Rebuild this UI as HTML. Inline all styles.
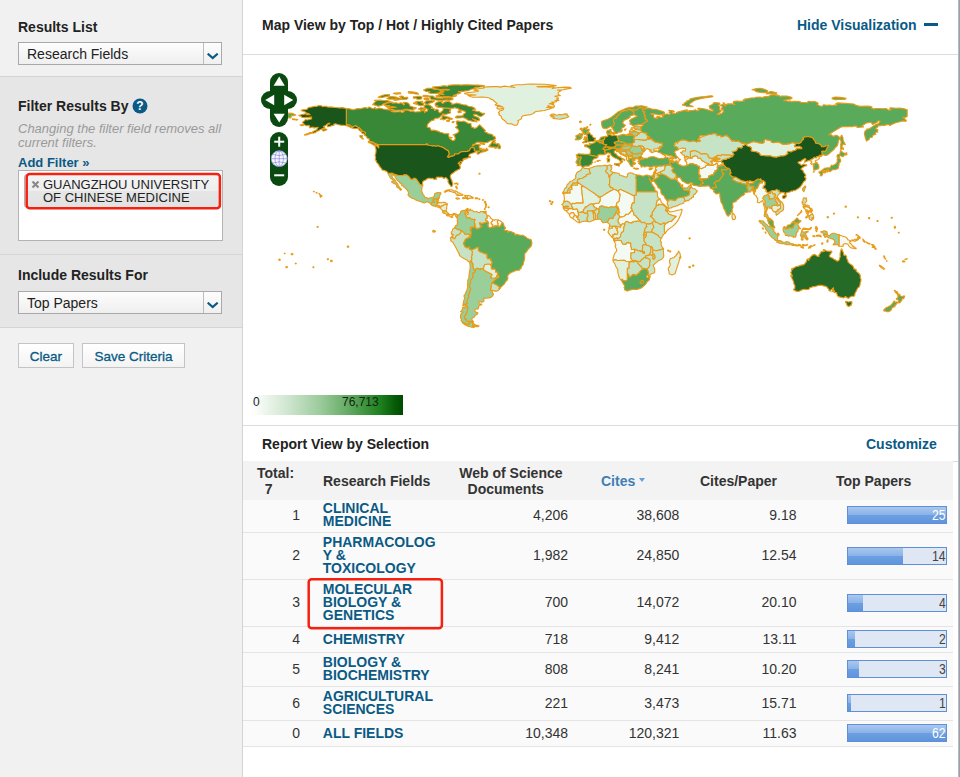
<!DOCTYPE html>
<html>
<head>
<meta charset="utf-8">
<title>InCites Essential Science Indicators</title>
<style>
*{box-sizing:border-box;margin:0;padding:0}
html,body{width:960px;height:777px;overflow:hidden;background:#fff;font-family:"Liberation Sans",sans-serif;color:#222}
body{position:relative}
.abs{position:absolute}
/* sidebar */
#side{position:absolute;left:0;top:0;width:243px;height:777px;background:#f1f1f1;border-right:1px solid #d3d3d3}
#side .sec2{position:absolute;left:0;top:76px;width:242px;height:252px;background:#e6e6e6;border-top:1px solid #d4d4d4;border-bottom:1px solid #d4d4d4}
#side .div2{position:absolute;left:0;top:254px;width:242px;height:1px;background:#d6d6d6}
.h{position:absolute;left:18px;font-weight:bold;font-size:14px;line-height:16px;color:#222;white-space:nowrap}
.sel{position:absolute;left:18px;width:204px;height:23px;border:1px solid #a9a9a9;background:linear-gradient(#fdfdfd,#efefef);font-size:14px;line-height:21px;padding-left:8px;padding-top:1px;color:#222}
.sel i{position:absolute;right:0;top:0;width:18px;height:21px;border-left:1px solid #bdbdbd;background:linear-gradient(#fdfdfd,#f0f0f0)}
.sel i svg{position:absolute;left:3px;top:9.5px}
.btn{position:absolute;top:343px;height:25px;border:1px solid #c4c4c4;background:linear-gradient(#ffffff,#f3f3f3);color:#0a5a85;font-size:13.5px;line-height:23px;padding-top:.6px;text-align:center;-webkit-text-stroke:.3px #0a5a85}
/* main */
#main{position:absolute;left:243px;top:0;width:715px;height:777px;background:#fff}
#rb{position:absolute;left:958px;top:0;width:2px;height:777px;background:linear-gradient(90deg,#c4c9ce,#8b929a)}
.hl{position:absolute;left:0;height:1px;background:#d9dde0;width:715px}
.mh{position:absolute;font-weight:bold;font-size:14px;line-height:16px;color:#222;white-space:nowrap}
.lnk{color:#0a5a85}
/* table */
#tbl{position:absolute;left:0;top:461px;width:710px}
.row{position:absolute;left:0;width:710px;background:#fafafa;border-bottom:1px solid #e4e4e4}
.row div{position:absolute;font-size:14px;line-height:16px;color:#333;white-space:nowrap}
.row .n{left:0;width:57px;text-align:right}
.row .f{left:79.8px;font-weight:bold;font-size:14px;line-height:13px;color:#0a5a85;white-space:normal;width:130px}
.row .d{left:200px;width:125px;text-align:right}
.row .c{left:330px;width:106.3px;text-align:right}
.row .p{left:440px;width:113.5px;text-align:right}
.bar{position:absolute;left:604px;width:100px;height:18px;border:1px solid #5f8fd6;background:#dfe6f4}
.bar b{position:absolute;left:0;top:0;height:16px;background:linear-gradient(#aac7ef 0,#8bb3e8 47%,#6c9fe1 53%,#5f95dd 100%)}
.bar span{position:absolute;right:.4px;top:0;font-size:14px;line-height:16px;color:#444;font-weight:normal;transform:scaleX(.87);transform-origin:100% 50%}
.bar span.w{color:#fff}
</style>
</head>
<body>
<div id="side">
  <div class="h" style="top:18.5px">Results List</div>
  <div class="sel" style="top:42px">Research Fields<i><svg width="12" height="7" viewBox="0 0 12 7"><path d="M0.7 0.6 L5.7 5 L10.7 0.6" fill="none" stroke="#0a5a85" stroke-width="2.1" stroke-linecap="butt" stroke-linejoin="miter"/></svg></i></div>
  <div class="sec2"></div>
  <div class="div2"></div>
  <div class="h" style="top:97.5px">Filter Results By</div>
  <svg class="abs" style="left:132px;top:98px" width="16" height="16" viewBox="0 0 16 16"><circle cx="8" cy="8" r="7.5" fill="#0a5a85"/><text x="8" y="12.2" font-family="Liberation Sans" font-weight="bold" font-size="12" fill="#fff" text-anchor="middle">?</text></svg>
  <div class="abs" style="left:18px;top:122px;width:215px;font-style:italic;font-size:13px;line-height:14px;color:#9a9a9a">Changing the filter field removes all current filters.</div>
  <div class="abs lnk" style="left:18px;top:155px;font-weight:bold;font-size:13px;line-height:16px">Add Filter »</div>
  <div class="abs" style="left:18px;top:170px;width:205px;height:71px;background:#fff;border:1px solid #b3b3b3"></div>
  <div class="abs" style="left:24px;top:174px;width:197px;height:34px;border:1px solid #b0b0b0;border-radius:3px;background:linear-gradient(#f4f4f4 0,#eeeeee 50%,#e6e6e6 51%,#e2e2e2 100%)"></div>
  <svg class="abs" style="left:30.8px;top:180.2px" width="9" height="9" viewBox="0 0 9 9"><path d="M1.5 1.5L7.5 7.5M7.5 1.5L1.5 7.5" stroke="#8a8a8a" stroke-width="2.2" fill="none"/></svg>
  <div class="abs" style="left:43px;top:177.6px;font-size:13px;line-height:13px;color:#222;white-space:nowrap">GUANGZHOU UNIVERSITY<br>OF CHINESE MEDICINE</div>
  <svg class="abs" style="left:20px;top:168px" width="210" height="48" viewBox="20 168 210 48"><rect x="26.7" y="174" width="193.2" height="34.2" rx="3" fill="none" stroke="#f5200f" stroke-width="2.5"/></svg>
  <div class="h" style="top:267.3px">Include Results For</div>
  <div class="sel" style="top:291px">Top Papers<i><svg width="12" height="7" viewBox="0 0 12 7"><path d="M0.7 0.6 L5.7 5 L10.7 0.6" fill="none" stroke="#0a5a85" stroke-width="2.1" stroke-linecap="butt" stroke-linejoin="miter"/></svg></i></div>
  <div class="btn" style="left:18px;width:56px">Clear</div>
  <div class="btn" style="left:82px;width:103px">Save Criteria</div>
</div>
<div id="rb"></div>
<div id="main">
  <div class="mh" style="left:19px;top:17px">Map View by Top / Hot / Highly Cited Papers</div>
  <div class="mh lnk" style="left:554px;top:17px">Hide Visualization</div>
  <div class="abs" style="left:681px;top:23px;width:13.5px;height:3px;background:#0a5a85"></div>
  <div class="hl" style="top:54px"></div>
  <!--MAP-->
<svg class="abs" id="map" style="left:0;top:55px" width="714" height="370" viewBox="0 55 714 370"><g stroke="#ea9a15" stroke-width="1.1" stroke-linejoin="round">
<g fill="#f3f9f3">
<path d="M221.8,195.4L222.8,195.5L224.3,195.8L224.5,196.7L224.4,197.4L223.9,197.7L224.4,198.2L224.3,198.7L223.2,198.4L222.4,198.5L221.3,198.4L220.5,198.7L219.5,198.2L219.7,197.6L221.3,197.8L222.6,198L223.3,197.6L222.4,196.8L222.5,196.2L221.3,195.9Z"/>
<path d="M224.3,195.8L224.5,195.5L225.9,195.5L227,195.9L227.4,195.9L227.7,196.5L228.7,196.5L228.6,197L229.4,197L230.3,197.7L229.6,198.4L228.8,198L228,198.1L227.4,198L227.1,198.3L226.4,198.4L226.2,198L225.6,198.3L224.9,199.4L224.4,199.2L224.3,198.7L224.4,198.2L223.9,197.7L224.4,197.4L224.5,196.7Z"/>
<path d="M214.1,197.9L215.3,198L216.2,198.5L216.5,198.9L215.3,199L214.7,199.3L213.7,199L212.8,198.3L213,198Z"/>
<path d="M233.8,197.9L234.7,198L235,198.3L234.6,198.8L233.3,198.8L232.3,198.8L232.1,198.1L232.4,197.8Z"/>
<path d="M214.2,188.7L213.7,188.8L213.3,187.8L212.6,187.2L213,186.1L213.5,186.2L214.1,187.7ZM213.7,183.8L211.8,184L211.6,183.4L212.5,183.2L213.6,183.3ZM215.1,183.7L214.8,185L214.5,184.7L214.5,183.8L213.7,183.1L213.7,182.9Z"/>
<path d="M245.2,215.6L246.4,216.2L247.5,217.4L247.5,218.3L248.2,218.3L249.1,219.2L249.8,219.8L249.5,221.3L248.5,221.8L248.5,222.2L248.2,223.1L249,224.4L249.6,224.4L249.8,225.4L250.8,226.9L250.4,226.9L249.4,226.8L248.9,227.3L248.1,227.6L247.5,227.6L247.4,228L246.5,227.9L245.4,227.1L245.3,226.3L244.9,225.4L245.1,223.9L245.6,223.3L245.2,222.5L244.6,222.2L244.8,221.4L244.4,221L243.5,221.1L242.3,219.8L242.8,219.3L242.8,218.5L243.9,218.2L244.3,217.9L243.7,217.2L243.8,216.6Z"/>
<path d="M249.8,219.8L251.9,220.1L252.1,219.8L253.5,219.7L255.4,220.1L254.4,221.6L254.6,222.8L255.3,223.9L255,224.6L254.8,225.4L254.4,226.2L253.4,225.8L252.5,226L251.8,225.8L251.7,226.3L251.9,226.7L251.8,227L250.8,226.9L249.8,225.4L249.6,224.4L249,224.4L248.2,223.1L248.5,222.2L248.5,221.8L249.5,221.3Z"/>
<path d="M255.4,220.1L255.9,220.3L257.2,220.7L259.1,222.2L259.4,222.9L258.3,224.5L257.8,225.8L257.1,226.5L256.3,226.6L256.1,226.1L255.7,226L255.1,226.5L254.4,226.2L254.8,225.4L255,224.6L255.3,223.9L254.6,222.8L254.4,221.6Z"/>
<path d="M328.4,204.7L327.2,203.5L326.2,202.2L325,201.7L324.2,201.2L323.2,201.2L322.4,201.6L321.5,201.4L320.9,202L320.7,201.1L321.2,200.2L321.4,198.6L321.2,196.8L321,196L321.2,195.1L320.7,194.3L319.8,193.5L320.2,192.9L327.1,192.9L326.7,190.4L327.2,189.5L328.8,189.4L328.7,184.9L334.5,185L334.5,182.3L341.1,186.6L338.4,186.6L339.2,194.1L340.1,201.7L340.4,201.9L340,203.1L333,203.1L332.7,203.5L332,203.4L331,203.8L329.8,203.3L329.3,203.3L329,204.3Z"/>
<path d="M334.9,216.8L334.4,216.7L334,217.4L333.6,217.4L333.2,217L333.3,216.3L332.6,215.3L332.1,215.5L331.8,215.5L331.3,215.6L331.3,215L331,214.5L331.1,214L330.7,213.3L330.2,212.6L328.8,212.6L328.4,213L327.9,213L327.6,213.4L327.4,213.9L326.5,214.6L325.7,213.6L325.1,212.9L324.6,212.7L324.2,212.4L324,211.6L323.7,211.2L323.2,210.9L324,210.1L324.5,210.1L325,209.8L325.4,209.8L325.6,209.6L325.5,209L325.7,208.8L325.7,208.2L326.5,208.2L327.8,208.7L328.2,208.6L328.3,208.4L329.3,208.5L329.5,208.5L329.6,209.1L329.9,209.1L330.4,208.9L330.7,208.9L331.1,209.4L331.9,209.5L332.4,209.1L332.9,208.9L333.3,208.7L333.7,208.7L334.1,209.1L334.3,209.6L335,210.3L334.7,210.7L334.6,211.3L335,211.1L335.2,211.3L335.1,211.9L335.6,212.4L335.3,212.5L335.1,213.1L335.5,213.8L336,215.2L335.3,215.4L335.1,215.7L335.3,216L335.2,216.8Z"/>
<path d="M323.2,210.9L322.3,210.2L321.5,210.1L321.1,209.6L321.1,209.3L320.6,208.9L320.5,208.6L321.4,208.3L322,208.3L322.5,208.1L325.7,208.2L325.7,208.8L325.5,209L325.6,209.6L325.4,209.8L325,209.8L324.5,210.1L324,210.1Z"/>
<path d="M329.7,218.3L329.2,218.2L327.9,217.5L327,216.6L326.7,215.9L326.5,214.6L327.4,213.9L327.6,213.4L327.9,213L328.4,213L328.8,212.6L330.2,212.6L330.7,213.3L331.1,214L331,214.5L331.3,215L331.3,215.6L331.8,215.5L331,216.3L330.2,217.3L330.1,217.8Z"/>
<path d="M336.2,222.6L335.7,222.6L333.9,221.8L332.3,220.4L330.8,219.5L329.7,218.3L330.1,217.8L330.2,217.3L331,216.3L331.8,215.5L332.1,215.5L332.6,215.3L333.3,216.3L333.2,217L333.6,217.4L334,217.4L334.4,216.7L334.9,216.8L334.8,217.3L335,218.1L334.6,218.9L335.1,219.4L335.7,219.5L336.4,220.2L336.5,220.9L336.3,221.1Z"/>
<path d="M353.4,209.3L353.5,208.1L351.4,207.7L351.4,206.9L350.4,205.8L350.2,205L350.3,204.1L351.4,204L352.1,203.4L354.5,203.3L356,203L356.2,201.9L357.1,200.8L357.1,196.7L359.6,195.9L364.6,192.5L370.6,189.2L373.4,189.9L374.4,190.9L375.6,190.3L376,193L376.7,193.4L376.7,194L377.4,194.6L377.1,195.3L376.4,198.9L376.3,201.1L374.1,202.8L373.3,205.1L374,205.8L374,206.9L375.2,206.9L375,207.7L374.5,207.8L374.4,208.4L374.1,208.4L372.9,206.5L372.5,206.4L371.1,207.4L369.8,206.9L368.9,206.8L368.3,207L367.3,207L366.3,207.7L365.4,207.8L363.3,206.9L362.5,207.3L361.6,207.3L360.9,206.6L359.2,206L357.3,206.2L356.8,206.6L356.6,207.6L356.1,208.3L356,209.8L354.6,208.8L354,208.8Z"/>
<path d="M375,207.7L375.2,206.9L374,206.9L374,205.8L373.3,205.1L374.1,202.8L376.3,201.1L376.4,198.9L377.1,195.3L377.4,194.6L376.7,194L376.7,193.4L376,193L375.6,190.3L377.4,189.3L384.3,192.6L391.3,196L391.4,202.9L389.9,202.8L389.1,204.1L388.6,205.2L389,205.6L388.4,206.1L388.6,206.8L388.2,207.6L388,208.2L388.6,208.1L389,208.8L389,209.8L389.6,210.3L389.6,210.7L388.5,211L387.6,211.7L386.3,213.6L384.7,214.5L383,214.4L382.5,214.5L382.7,215.1L381.8,215.7L381,216.4L378.9,217.1L378.4,216.7L378.1,216.7L377.8,217.1L376.4,217.2L376.6,216.8L376.1,215.6L375.8,214.8L375.1,214.5L374,213.5L374.4,212.7L375.2,212.9L375.7,212.7L376.7,212.8L375.7,211.2L375.8,210L375.7,208.8Z"/>
<path d="M376.4,217.2L377.8,217.1L378.1,216.7L378.4,216.7L378.9,217.1L381,216.4L381.8,215.7L382.7,215.1L382.5,214.5L383,214.4L384.7,214.5L386.3,213.6L387.6,211.7L388.5,211L389.6,210.7L389.8,211.5L390.8,212.6L390.8,213.3L390.5,214L390.6,214.6L391.3,215L392.6,215.8L393.5,216.5L393.5,217.1L394.7,218L395.5,218.8L395.9,219.8L397.2,220.5L397.5,221.1L396.9,221.2L395.8,221.2L394.5,221L393.8,221.2L393.6,221.6L393,221.6L392.3,221.3L390.4,222.1L389.6,222L389.3,222.1L388.8,223.2L387.5,222.8L386.2,222.7L385.1,222L383.7,221.4L382.7,222L382,222.9L381.9,224.1L380.8,224L379.6,223.7L378.6,224.6L377.6,226.2L377.5,225.7L377.4,224.9L376.6,224.4L375.9,223.5L375.8,222.8L375,221.9L375.1,221.4L374.9,220.7L375.1,219.3L375.5,219Z"/>
<path d="M366.5,226.2L369.4,226.3L369.4,228.3L366.8,228.3L366.2,228.4L365.9,228.2Z"/>
<path d="M378.2,240.5L378.6,241.8L379.1,242.8L379.5,243.4L380.2,244.3L381.3,244.2L381.9,243.9L382.9,244.2L383.1,243.7L383.6,242.7L384.7,242.6L384.8,242.3L385.6,242.3L385.5,243L387.6,242.9L387.7,244L388,244.7L387.7,245.8L387.9,246.8L388.5,247.5L388.4,249.6L388.8,249.4L389.6,249.5L390.6,249.2L391.4,249.3L391.6,249.8L391.4,250.7L391.7,251.5L391.5,252.2L391.6,252.8L388,252.7L387.9,258.3L389.1,259.7L390.2,260.8L387,261.5L382.8,261.3L381.6,260.4L374.5,260.5L374.2,260.6L373.2,259.9L372,259.8L371,260.1L370.1,260.4L370,259.3L370.2,257.8L370.8,256.2L370.9,255.5L371.5,253.9L371.9,253.2L372.9,252L373.5,251.2L373.7,249.9L373.6,249L373,248.3L372.6,247.3L372.2,246.2L372.2,245.9L372.8,245.2L372.2,243.5L371.9,242.3L371,241.2L371.2,240.9L371.9,240.6L372.4,240.7L373,240.4ZM371.4,240.1L370.9,240.3L370.5,239L371.2,238.3L371.7,238L372.4,238.6L371.7,238.9L371.4,239.4Z"/>
<path d="M400.3,280.8L400.9,281.3L400.4,282.2L400.1,282.7L399.1,283L398.8,283.6L398.1,283.8L396.8,282.4L397.8,281.3L398.7,280.6L399.5,280.3Z"/>
<path d="M421.3,225.3L422.8,223.4L422.8,223.3L423.3,222.8L424.4,222.8L425.9,221.5L428.2,221.5L428.2,221.4L433.1,216.3L433.1,216.2L433,216.2L431.7,216.2L426,214.2L425.3,213.5L424.7,212.7L424,211.7L424.4,211.1L425.1,210.2L425.6,210.5L426,211.2L426.7,211.9L426.8,211.9L427.6,212L429.3,211.5L431.2,211.3L432.7,210.8L433.6,210.6L434.2,210.3L435.2,210.3L437.5,209.8L438.3,209.2L439,209.2L439,209.7L438.8,210.7L438.9,211.6L438.5,212.2L438,214.1L437.1,216.1L436.1,218.3L434.6,220.9L433.1,222.8L431,225.2L429.3,226.6L426.7,228.4L425,229.7L423.1,231.8L422.7,232.7L422.3,233.1L421.3,231.7L421.3,225.3Z"/>
<path d="M423.7,208.3L423.1,207.7L422.3,206.7L421.6,206.1L421.1,205.5L419.6,204.8L418.4,204.8L418,204.4L416.9,204.8L415.9,204.1L415.3,205.4L413.3,205L413.1,204.3L413.9,201.7L414,200.6L414.6,200L415.9,199.7L416.8,198.7L417.8,200.8L418.3,202.4L419.2,203.2L421.6,204.9L422.6,205.9L423.5,206.9L424.1,207.5L424.9,208Z"/>
<path d="M424.9,208L425.4,208.5L425.3,209.3L424.3,209.7L425.1,210.2L424.4,211.1L424,210.8L423.6,210.9L422.6,210.9L422.6,210.3L422.5,209.9L423,209.1L423.7,208.3Z"/>
<path d="M320.2,207.2L320.4,206.5L322.4,206.4L322.7,206L323.3,205.9L324,206.4L324.5,206.4L325.1,206.1L325.5,206.6L324.7,207L323.9,207L323.2,206.6L322.5,207L322.2,207L321.8,207.3Z"/>
<path d="M456.6,167.9L458.4,168.6L459.7,168.3L460.1,167.5L461.5,167.3L462.5,166.7L462.8,165.4L464.3,165L464.5,164.4L465.4,164.9L465.9,164.9L466.9,164.9L468.2,165.3L468.7,165.5L470,164.9L470.6,165.3L471.1,164.5L472.2,164.5L472.4,164.2L472.6,163.6L473.4,162.9L474.3,163.3L474.1,163.9L474.7,164L474.5,165.4L475.2,166L475.8,165.6L476.6,165.5L477.7,164.7L478.9,164.8L480.7,164.8L481,165.3L480,165.5L479.1,165.8L477.1,166L475.2,166.4L474.2,167.2L474.6,167.9L474.8,168.8L473.9,169.5L474,170.2L473.5,170.8L471.9,170.8L472.5,171.9L471.4,172.3L470.7,173.4L470.8,174.5L470.1,174.9L469.5,174.8L468.1,175L467.9,175.5L466.6,175.5L465.6,176.5L465.6,178L463.3,178.7L462.1,178.5L461.8,178.9L460.7,178.7L459,179L456,178.1L457.6,176.5L457.5,175.4L456.1,175.1L456,174L455.4,172.6L456.2,171.6L455.4,171.3L455.9,170.1Z"/>
<path d="M509.9,181.7L510.6,182.2L510.5,183.3L509.1,183.3L507.6,183.2L506.5,183.5L504.9,182.8L504.8,182.5L506,181.2L507,180.7L508.2,181.2L509.1,181.2Z"/>
<path d="M523.6,194.9L522.6,195.7L521.3,195.8L520.6,197.6L519.8,198L520.7,199.5L521.8,200.8L522.5,201.9L521.8,203.4L521.2,203.8L521.7,204.7L522.8,206L523,207L523,207.8L523.7,209.4L522.7,211L521.9,212.8L521.7,211.5L522.2,210.2L521.7,209.2L521.8,207.3L521.1,206.4L520.5,204.3L520.2,202.1L519.4,200.6L518.3,201.5L516.3,202.7L515.3,202.6L514.2,202.2L514.8,200L514.5,198.4L513.1,196.4L513.3,195.7L512.3,195.5L511.1,194.1L510.9,192.7L511.6,192.9L511.6,191.7L512.5,191.3L512.3,190.5L512.7,189.9L512.7,188.1L514.1,188.5L514.9,187.1L515,186.2L515.9,184.8L515.9,183.8L518.1,182.6L519.4,182.9L519.2,181.8L519.9,181.5L519.7,180.8L520.7,180.7L521.3,181.7L522.1,182.1L522.1,183.5L522.1,184.9L520.4,186.4L520.2,188.4L522.1,188.2L522.5,189.8L523.6,190.1L523.1,191.5L524.4,192.2L525.1,192.5L526.4,192L526.5,192.7L525,193.9L524.6,194.5Z"/>
<path d="M568,245.7L568.2,246.6L568.2,246.1L569.7,246.1L571,244.9L571.5,244.7L572.2,244.9L571.5,245.4L569.7,246.1L568.2,246.6L567.1,247.9Z"/>
<path d="M577.9,156.1L578.2,156.4L577.5,156.3L576.8,156.9L576.2,157.5L576.3,158.8L575.4,159.1L575.1,159.4L574.4,160L573.3,160.2L572.5,160.7L572.5,161.5L572.3,161.7L572.9,162L573.9,162.7L573.7,163.1L572.9,163.3L571.7,163.3L571,164.1L570.3,164.1L570.1,164.2L569.3,163.9L569.1,164.2L568.6,164.4L568.5,164L568.1,163.9L567.6,163.6L568.1,162.8L568.5,162.6L568.3,162.3L568.8,161.4L568.6,161.1L567.6,160.9L566.8,160.4L568.2,159.3L570.1,158.4L571.4,157.1L572.2,157.7L573.7,157.7L573.4,156.8L576.1,156.1L576.8,155.1L577.9,156.1Z"/>
<path d="M456.6,167.9L456.5,166.4L455.2,166.4L453.2,164.8L451.8,164.6L449.8,163.7L448.6,163.6L447.8,163.9L446.7,163.9L445.4,164.9L443.9,165.2L443.6,164L443.8,162.1L442.4,161.5L442.9,160.3L441.7,160.2L442.1,158.8L443.8,159.2L445.3,158.6L444,157.6L443.5,156.6L442.1,157L441.9,158.3L441.4,157.2L442.2,156.6L444.2,156.2L445.3,156.7L446.6,158.1L447.5,158L449.4,158L449.1,157.1L450.6,156.5L452.1,155.5L454.5,156.4L454.6,157.8L455.3,158.2L457.2,158.1L457.8,158.4L458.6,160.2L460.7,161.4L461.8,162.2L463.6,163.1L465.9,163.8L465.9,164.9L465.4,164.9L464.5,164.4L464.3,165L462.8,165.4L462.5,166.7L461.5,167.3L460.1,167.5L459.7,168.3L458.4,168.6Z"/>
<path d="M473.7,159.9L473.1,160.4L471.2,160.1L471,161.1L472.9,161L475.1,161.6L478.4,161.3L478.8,162.9L479.4,162.7L480.5,163.1L480.4,163.8L480.7,164.8L478.9,164.8L477.7,164.7L476.6,165.5L475.8,165.6L475.2,166L474.5,165.4L474.7,164L474.1,163.9L474.3,163.3L473.4,162.9L472.6,163.6L472.4,164.2L472.2,164.5L471.1,164.5L470.6,165.3L470,164.9L468.7,165.5L468.2,165.3L469.2,163.5L468.8,162.2L467.5,161.8L468,161L469.4,161.1L470.2,160.1L470.8,159L473.1,158.6L472.8,159.4L473,159.9Z"/>
<path d="M596,234.7L599.1,235.9L602.3,236.9L603.5,237.8L604.5,238.7L604.8,239.8L607.7,240.8L608.1,241.8L606.5,241.9L606.9,243.1L608.4,244.2L609.6,246.1L610.6,246L610.5,246.8L611.8,247.1L611.3,247.4L613.2,248.2L613,248.7L611.8,248.8L611.4,248.4L609.9,248.2L608.1,247.9L606.8,246.8L605.8,245.8L604.9,244.3L602.6,243.5L601.1,244L600,244.6L600.3,245.9L598.9,246.5L597.9,246.2L596.1,246.1L596,234.7ZM616.4,236.6L617.1,237.2L617.3,238.1L616.7,238.5L616.4,237.5L616,236.8L615.2,236.2L614.2,235.5L612.9,235L613.4,234.6L614.4,235.1L615,235.4ZM614,240.4L613.1,240.8L612.2,241.2L611.3,241.2L609.8,240.7L608.8,240.2L609,239.7L610.6,240L611.5,239.8L612,238.9L612.2,239.9L613.2,239.7L613.7,239.1L614.7,238.5L614.5,237.5L615.5,237.5L615.9,237.7L615.8,238.7L615.2,239.8L614.3,239.9ZM620.1,239.5L620.6,239.9L621.5,241L622.3,241.6L622.1,242.1L621.6,242.3L620.8,241.6L620,240.5L619.7,239.2L619.9,239Z"/>
<path d="M628.6,244.2L630.3,244.7L631.5,246.1L632.2,247L631.9,247.3L630.6,246.8L628.9,245.1ZM629.1,247.3L629.9,246.6L630.7,247.4L629.8,247.5ZM624.9,243L626.5,243.5L627.2,244L626.1,244.1L624.7,243.5ZM623.1,242.1L624.2,242.4L624.9,243.1L623.8,242.8ZM631.5,248L632.9,248.5L633.4,249.1L632.2,249.1Z"/>
<path d="M640.8,255.7L641.7,256.2L641.8,258L641.1,257.6L640.8,257.1ZM641.8,258.2L642.9,259L642.4,259.2L641.8,258.7ZM643.4,260.8L644.1,261.1L643.8,261.5Z"/>
<path d="M636.3,265.3L637,265.4L638,266L638.8,266.5L639.4,267L640.8,268.1L641.7,268.9L641,269.3L640.1,268.9L638.8,268.1L637.7,267.2L636.5,265.9Z"/>
<path d="M659.5,261.1L660.9,260.8L661.9,261.6L661.4,262L659.7,261.9ZM661.8,259.2L663.2,258.9L664.2,258.5L664,259L662.8,259.6Z"/>
<path d="M50,254.1L49.6,253.5L48.6,253.5L48.1,254.1L48.6,254.8L49.6,254.8Z"/>
<path d="M44.1,266.5L43.3,266.5L42.8,267L43.2,267.7L44,267.7L44.5,267.1Z"/>
<path d="M36.1,259.1L35.7,259.7L36,260.3L36.8,260.4L37.3,259.8L37,259.2Z"/>
<path d="M87.5,260.8L87.8,261.6L88.8,261.7L89.3,261.1L89,260.3L88,260.2Z"/>
<path d="M104.5,247.2L105.3,247.3L105.8,246.8L105.5,246.1L104.7,246L104.2,246.5Z"/>
<path d="M85.1,259.7L85.5,259.3L85.3,258.8L84.7,258.7L84.3,259.1L84.5,259.6Z"/>
<path d="M191.6,231.5L191.4,230.6L190.4,230.4L189.6,231L189.9,231.9L190.9,232.1Z"/>
<path d="M192.3,231.1L191.7,230.9L191.3,231.3L191.4,231.8L192,231.9L192.4,231.6Z"/>
<path d="M308.3,203.1L307.6,203.6L307.8,204.2L308.5,204.5L309.2,204.1L309.1,203.4Z"/>
<path d="M306.3,200.9L306.4,201.5L307.1,201.8L307.7,201.4L307.6,200.8L306.9,200.6Z"/>
<path d="M308.9,202.4L309.5,202.6L310,202.3L310,201.8L309.4,201.5L308.9,201.8Z"/>
<path d="M450.2,266.3L450.9,265.9L450.9,265.2L450.2,264.9L449.5,265.2L449.5,265.9Z"/>
<path d="M447.3,267.4L447.4,266.7L446.7,266.4L445.9,266.7L445.9,267.4L446.6,267.8Z"/>
<path d="M447.3,238.1L446.7,237.7L446,238L446,238.6L446.6,238.9L447.2,238.7Z"/>
<path d="M425.4,250L424.7,250.3L424.6,250.9L425.2,251.3L425.9,251L426,250.4Z"/>
<path d="M426.8,251.2L426.6,251.7L427.1,252L427.7,251.9L427.8,251.3L427.4,251Z"/>
<path d="M360.5,229.9L361,230.4L361.7,230.2L361.9,229.6L361.4,229.2L360.6,229.3Z"/>
<path d="M236.3,174.3L236.9,174.1L237.1,173.6L236.7,173.3L236.1,173.4L235.9,173.9Z"/>
<path d="M603.4,206.6L603,206.1L602.2,206.2L602,206.8L602.4,207.3L603.1,207.2Z"/>
<path d="M591.2,213.1L590.6,213.2L590.4,213.7L590.7,214.1L591.3,214L591.6,213.5Z"/>
<path d="M584.4,216.7L584,217.2L584.4,217.7L585.2,217.7L585.5,217.1L585.1,216.6Z"/>
<path d="M614.3,217.3L614.6,217.7L615.2,217.7L615.5,217.3L615.2,216.8L614.6,216.8Z"/>
<path d="M625.7,218.7L626.4,218.7L626.8,218.2L626.5,217.6L625.8,217.6L625.4,218.1Z"/>
<path d="M634.8,221.4L635.1,221L634.9,220.5L634.2,220.5L633.9,220.9L634.1,221.4Z"/>
<path d="M649.4,217.9L649.2,217.4L648.6,217.3L648.2,217.7L648.4,218.2L649.1,218.3Z"/>
<path d="M652.4,227.4L651.8,227.3L651.3,227.7L651.6,228.2L652.2,228.2L652.6,227.8Z"/>
<path d="M651.6,226.3L651.3,226.6L651.4,227L651.9,227.1L652.3,226.8L652.2,226.4Z"/>
<path d="M655.3,232.5L655.4,233L655.9,233.1L656.3,232.8L656.2,232.3L655.7,232.2Z"/>
<path d="M242.6,205L243.2,205.2L243.6,204.9L243.5,204.3L242.9,204.2L242.5,204.5Z"/>
<path d="M242.6,203.8L243.1,203.5L243,203L242.4,202.8L241.9,203.1L242,203.6Z"/>
<path d="M242.8,202.1L242.7,201.5L242,201.3L241.4,201.6L241.5,202.3L242.2,202.5Z"/>
<path d="M243.5,205.7L243,205.5L242.6,205.7L242.6,206.2L243.1,206.3L243.5,206.1Z"/>
<path d="M242.7,206.7L242.2,206.9L242.3,207.4L242.7,207.6L243.2,207.3L243.2,206.9Z"/>
<path d="M241.4,208.8L241.4,209.3L241.8,209.5L242.3,209.3L242.3,208.8L241.8,208.6Z"/>
<path d="M245,207.4L245.5,207.7L246.1,207.5L246.2,207L245.6,206.7L245.1,206.9Z"/>
<path d="M239.8,200.4L240.3,200.2L240.4,199.8L240,199.5L239.5,199.7L239.4,200.1Z"/>
<path d="M236.8,199.5L236.9,199L236.5,198.8L236,198.9L235.9,199.3L236.3,199.6Z"/>
<path d="M75.2,226.7L74.7,226.4L74.1,226.5L74,227L74.5,227.4L75.1,227.2Z"/>
<path d="M70.5,266.8L70,266.9L69.9,267.4L70.3,267.7L70.8,267.6L70.9,267.1Z"/>
<path d="M52.4,263.2L52.2,263.6L52.6,263.9L53.1,263.8L53.3,263.4L52.9,263.1Z"/>
<path d="M41.3,253.5L41.6,253.8L42,253.7L42.2,253.4L41.9,253.1L41.5,253.2Z"/>
</g>
<g fill="#e0f1e0">
<path d="M267.9,85.8L273.8,84.8L279.9,84.8L282.2,84.2L288.3,84L302.3,84.2L313.2,85.6L310,86.3L303.3,86.4L293.9,86.6L294.8,86.9L301,86.7L306.2,87.3L309.6,86.7L311.1,87.4L309.2,88.4L313.6,87.7L322.1,87.1L327.3,87.4L328.3,88.1L321.2,89.4L320.2,89.8L314.6,90.1L318.7,90.2L316.6,91.4L315.2,92.6L315.3,94.5L317.4,95.7L314.6,95.7L311.8,96.3L315,97.2L315.4,98.7L313.5,98.9L315.8,100.4L311.9,100.5L313.9,101.2L313.4,101.8L310.9,102.1L308.5,102.1L310.7,103.3L310.7,104.1L307.2,103.3L306.3,103.8L308.7,104.2L311,105.3L311.6,106.7L308.5,107.1L307.2,106.4L305,105.4L305.6,106.6L303.6,107.5L308.2,107.6L310.6,107.6L305.9,109.2L301.2,110.5L296.1,111.1L294.1,111.2L292.3,111.8L289.9,113.7L286.1,114.9L284.9,115L282.6,115.4L280.1,115.8L278.6,116.9L278.6,118.1L277.7,119.3L274.8,120.7L275.5,122L274.7,123.5L273.8,125.2L271.4,125.3L268.8,123.9L265.3,123.8L263.6,122.9L262.4,121.2L259.4,119L258.5,117.9L258.3,116.3L255.9,114.7L256.5,113.4L255.3,112.8L257.1,110.7L259.7,110.1L260.4,109.4L260.8,108L258.8,108.6L257.8,108.9L256.2,109.1L254.1,108.6L254,107.4L254.7,106.4L256.3,106.4L259.8,106.9L256.8,105.8L255.3,105.2L253.5,105.4L252.1,105L254,103.3L253,102.7L251.6,101.5L249.5,99.6L247.2,99L247.3,98.2L242.6,97.2L238.9,97.1L234.2,97.2L229.9,97.3L227.9,96.7L224.9,95.6L229.5,95.1L233,95L225.5,94.5L221.6,93.8L221.8,93.1L228.4,92.3L234.8,91.5L235.5,90.8L230.8,90.2L232.3,89.5L238.4,88.3L240.9,88.1L240.2,87.3L244.3,86.9L249.7,86.6L255.1,86.6L257,87.1L261.6,86.1L265.8,86.8L268.2,86.9L271.9,87.5L267.7,86.6Z"/>
<path d="M193.9,199.1L193.9,198.8L194.1,198.7L194.4,199L195,197.9L195.3,197.9L195.3,198.1L195.7,198.1L195.7,198.6L195.4,199.4L195.5,199.6L195.3,200.3L195.5,200.4L195.2,201.3L194.9,201.8L194.6,201.8L194.2,202.4L193.7,202.4L193.9,200.5Z"/>
<path d="M197.1,207.5L196.8,207L196.2,206.8L196.4,206.1L196.1,205.9L195.7,205.8L195,206L194.9,205.8L194.4,205.5L194,205.1L193.5,205L193.9,204.5L193.7,204.2L193.9,203.9L194.7,203.4L195.5,202.7L195.7,202.8L196,202.5L196.5,202.4L196.7,202.6L197,202.5L197.8,202.7L198.6,202.6L199.2,202.4L199.4,202.2L199.9,202.3L200.3,202.4L200.8,202.4L201.1,202.2L201.9,202.5L202.2,202.5L202.8,202.9L203.3,203.3L203.9,203.5L204.3,204L203.8,204L203.5,204.2L202.9,204.4L202.5,204.4L202.1,204.7L201.7,204.6L201.4,204.3L201.3,204.4L201,204.8L200.9,204.8L200.8,205.1L200.2,205.6L199.9,205.8L199.7,206L199.2,205.7L198.8,206.1L198.5,206.1L198,206.2L198.1,207L197.8,207L197.6,207.4Z"/>
<path d="M196.2,206.8L196,207.2L195,207.2L194.4,207L193.7,206.7L192.7,206.6L192.2,206.2L192.3,205.9L192.9,205.5L193.2,205.3L193.1,205.1L193.5,205L194,205.1L194.4,205.5L194.9,205.8L195,206L195.7,205.8L196.1,205.9L196.4,206.1Z"/>
<path d="M199.9,210.8L199.3,210.3L198.4,209.6L198.1,209L197.3,208.4L196.4,207.6L196.6,207.4L196.9,207.6L197.1,207.5L197.6,207.4L197.8,207L198.1,207L198,206.2L198.5,206.1L198.8,206.1L199.2,205.7L199.7,206L199.9,205.8L200.2,205.6L200.8,205.1L200.9,204.8L201,204.8L201.3,204.4L201.4,204.3L201.7,204.6L202.1,204.7L202.5,204.4L202.9,204.4L203.5,204.2L203.8,204L204.3,204L204.2,204.2L204.1,204.5L204.3,205.2L203.9,205.8L203.7,206.5L203.6,207.3L203.7,207.7L203.8,208.5L203.5,208.7L203.3,209.4L203.5,209.9L203.1,210.3L203.2,210.8L203.5,211.1L203,211.4L202.5,211.3L202.2,211L201.7,210.8L201.3,211.1L200.1,210.6Z"/>
<path d="M213.6,217.6L213,217.1L212.6,216.1L213,215.7L212.6,215.5L212.3,215L211.4,214.5L210.6,214.6L210.3,215.2L209.6,215.6L209.2,215.7L209,216.1L209.8,217L209.4,217.2L209.1,217.5L208.3,217.6L208,216.5L207.8,216.8L207.2,216.7L206.8,216L206.1,215.9L205.7,215.7L204.9,215.7L204.9,216.1L204.7,215.8L204.8,215.5L204.9,215.1L204.8,214.8L205.1,214.6L204.7,214.4L204.7,213.6L205.4,213.5L206,214.1L206,214.5L206.7,214.6L206.9,214.4L207.3,214.8L208.2,214.7L208.9,214.3L210,213.9L210.6,213.4L211.6,213.5L211.5,213.7L212.5,213.7L213.2,214L213.8,214.6L214.5,215L214.3,215.3L214.7,216.3L214.3,216.8L213.8,216.7Z"/>
<path d="M205.9,189.7L207.4,189.8L208.8,189.8L210.4,190.4L211.1,191.1L212.7,190.9L213.4,191.3L214.8,192.3L215.9,193.1L216.5,193.1L217.5,193.5L217.4,194L218.7,194L220,194.8L219.8,195.2L218.7,195.4L217.5,195.5L216.3,195.3L213.8,195.5L214.9,194.5L214.2,194.1L213.1,194L212.5,193.5L212.1,192.5L211.1,192.5L209.5,192.1L208.9,191.7L206.7,191.4L206.1,191.1L206.7,190.6L205,190.5L203.8,191.5L203,191.5L202.8,191.9L201.9,192.1L201.2,191.9L202.1,191.4L202.5,190.8L203.2,190.4L204.1,190Z"/>
<path d="M241.9,211.4L242.9,211.2L243.2,211.2L243.2,212.5L241.7,212.7L241.4,212.6L241.9,212.1Z"/>
<path d="M240.1,269.1L240.8,267L240.8,266L241.7,264.5L244.7,264L246.3,264L248,264.9L248,265.5L248.5,266.4L248.4,268.8L250.3,269.1L251,268.8L252.1,269.3L252.5,269.8L252.6,271.4L252.8,272.1L253.5,272.1L254.1,271.9L254.8,272.2L254.8,273.1L254.5,274.2L254.2,275.2L253.9,276.7L252.3,278.1L250.9,278.3L249,278.1L247.2,277.6L248.9,274.9L248.7,274.2L246.9,273.5L244.7,272.2L243.3,271.9L240.1,269.1Z"/>
<path d="M384.3,155.9L384.1,155.6L383.4,156.5L383.5,157L383.1,156.9L382.6,156.3L381.9,156L382.1,155.7L382.3,154.7L382.9,154.3L383.2,154.1L383.7,154.4L384,154.7L384.5,154.9L385.2,155.2L385.1,155.4L384.7,155.8Z"/>
<path d="M385.9,156.7L385.9,157.1L385.6,157L385.5,156.4L385.1,156.2L384.7,155.8L385.1,155.4L385.5,155.3L385.7,154.7L386,154.6L386.3,154.8L386.6,154.9L386.8,155.2L387.1,155.3L387.4,155.6L387.7,155.6L387.5,156L387.3,156.2L387.4,156.4L387,156.4Z"/>
<path d="M385.6,157L385.4,157.6L385.7,158.4L386.4,158.8L386.3,159.3L385.8,159.5L385.7,160.1L384.9,161L384.6,160.8L384.5,160.4L383.6,159.9L383.4,159L383.6,157.8L383.8,157.3L383.5,157L383.4,156.5L384.1,155.6L384.3,155.9L384.7,155.8L385.1,156.2L385.5,156.4Z"/>
<path d="M396.2,145.9L396.6,145.7L397.7,145.5L399,146L399.8,146.1L400.5,146.6L400.4,147.2L401.1,147.5L401.3,148.2L401.9,148.6L401.8,148.9L402.1,149.1L401.7,149.2L400.6,149.2L400.4,148.9L400.1,149L400.2,149.4L399.7,149.9L399.4,150.5L399,150.7L398.7,149.9L398.9,149.2L398.8,148.4L397.8,147.4L397.2,146.6L396.7,146.1Z"/>
<path d="M328.4,204.7L329,204.3L329.3,203.3L329.8,203.3L331,203.8L332,203.4L332.7,203.5L333,203.1L340,203.1L340.4,201.9L340.1,201.7L339.2,194.1L338.4,186.6L341.1,186.6L346.9,190.4L352.8,194.2L353.2,195L354.3,195.5L355.2,195.8L355.2,196.9L357.1,196.7L357.1,200.8L356.2,201.9L356,203L354.5,203.3L352.1,203.4L351.4,204L350.3,204.1L349.2,204.1L348.7,203.8L347.8,204L346.2,204.8L345.8,205.3L344.5,206.1L344.2,206.5L343.5,206.9L342.6,206.7L342.2,207.1L341.9,208.3L340.5,209.7L340.6,210.3L340.1,211.1L340.2,212.1L339.5,212.3L339.1,212.6L338.8,211.8L338.3,212L338,212L337.7,212.5L336.3,212.5L335.8,212.2L335.6,212.4L335.1,211.9L335.2,211.3L335,211.1L334.6,211.3L334.7,210.7L335,210.3L334.3,209.6L334.1,209.1L333.7,208.7L333.3,208.7L332.9,208.9L332.4,209.1L331.9,209.5L331.1,209.4L330.7,208.9L330.4,208.9L329.9,209.1L329.6,209.1L329.5,208.5L329.6,207.9L329.5,207.2L328.8,206.7L328.5,205.8Z"/>
<path d="M369.4,226.3L370.2,226.1L371.2,226.4L372.3,226.1L372.5,226.2L372.4,227L372.9,227.9L374.2,227.8L374.6,228.1L373.8,230.1L374.7,231.2L374.9,232.5L374.6,233.7L374.1,234.5L372.6,234.4L371.6,233.6L371.5,234.4L370.3,234.6L369.7,235L370.4,236.2L369,237.2L367.2,235.4L366.1,233.9L365,232.1L365.1,231.6L365.5,231L365.9,229.7L366.2,228.4L366.8,228.3L369.4,228.3Z"/>
<path d="M372.4,238.6L371.7,238L371.2,238.3L370.5,239L369,237.2L370.4,236.2L369.7,235L370.3,234.6L371.5,234.4L371.6,233.6L372.6,234.4L374.1,234.5L374.6,233.7L374.9,232.5L374.7,231.2L373.8,230.1L374.6,228.1L374.2,227.8L372.9,227.9L372.4,227L372.5,226.2L374.7,226.3L376.1,226.8L377.5,227.2L377.6,226.2L378.6,224.6L379.6,223.7L380.8,224L381.9,224.1L381.8,225.1L381.3,226.1L380.9,227.2L380.7,228.7L380.8,229.7L380.5,230.3L380.5,230.9L380.3,231.5L379.1,232.3L378.3,233.2L377.6,234.9L377.6,236.4L377.2,236.9L376.2,237.8L375.1,238.9L374.5,238.6L374.4,238.1L373.4,238.1L372.8,238.7Z"/>
<path d="M378.2,280.1L376.9,278.8L376.2,277.5L375.8,275.8L375.4,274.6L374.8,271.9L374.8,269.8L374.6,268.8L373.9,268.1L373,266.7L372.1,264.6L371.7,263.5L370.3,261.8L370.1,260.4L371,260.1L372,259.8L373.2,259.9L374.2,260.6L374.5,260.5L381.6,260.4L382.8,261.3L387,261.5L390.2,260.8L391.6,260.4L392.8,260.5L393.5,260.9L393.5,261.1L392.5,261.5L392,261.5L390.9,262.1L390.2,261.4L387.5,262L386.2,262.1L386.1,268.3L384.4,268.4L384.4,273.5L384.4,279.9L382.9,280.8L381.9,281L380.8,280.6L380,280.5L379.7,279.8L379,279.3Z"/>
<path d="M405.7,276.9L405.3,277.7L404.3,277.9L403.3,276.9L403.3,276.3L403.7,275.7L403.9,275.2L404.4,275L405.3,275.4L405.6,276.1Z"/>
<path d="M436.2,252L436.7,252.7L437.1,253.9L437.4,256L437.9,256.8L437.7,257.7L437.4,258.2L436.8,257.1L436.4,257.7L436.8,258.9L436.6,259.7L436.2,260.1L436,261.6L435.3,263.6L434.5,266L433.4,269.3L432.7,271.8L432,273.8L430.5,274.2L429,274.9L428,274.5L426.6,273.9L426.1,272.9L426,271.4L425.4,270L425.2,268.7L425.5,267.5L426.3,267.2L426.4,266.6L427.2,265.3L427.3,264.2L426.9,263.3L426.6,262.2L426.5,260.6L427.1,259.6L427.3,258.5L428.2,258.5L429.2,258.1L429.8,257.8L430.6,257.8L431.6,256.8L433,255.7L433.5,254.8L433.3,254.1L434,254.3L435,253.1L435,252L435.6,251.2Z"/>
<path d="M400.9,238.1L400.8,235.9L400.4,235.2L401.4,235.3L402,234.3L402.9,234.4L403,235.1L403.4,235.5L403.4,236.1L403,236.4L402.3,237.3L401.6,238Z"/>
<path d="M402.8,232.2L403.5,233.2L403.4,234.2L402.9,234.4L402,234.3L401.4,235.3L400.4,235.2L400.5,234.2L400.8,234.1L400.8,233L401.3,232.5L401.8,232.7L402.2,232Z"/>
<path d="M422.3,157.6L422.5,156.9L422.1,155.7L421.1,155L420.1,154.8L419.5,154.3L419.7,154.1L421.2,154.4L423.7,154.7L426.1,155.5L426.4,155.8L427.5,155.6L429.1,155.9L429.7,156.6L430.7,157L430.3,157.3L431.2,158.2L430.9,158.4L430,158.3L428.7,157.8L428.2,158.1L425.8,158.4L424.1,157.5Z"/>
<path d="M425.8,158.4L428.2,158.1L428.6,158.6L429.3,158.9L428.9,159.3L429.8,159.9L429.4,160.5L430.1,160.9L430.9,161.2L430.9,162.4L430.3,162.5L429.6,161.5L429.6,161.2L428.8,161.2L428.3,160.8L427.9,160.8L427.2,160.3L425.9,159.9L426.1,159Z"/>
<path d="M428.3,160.8L428.8,161.2L429.6,161.2L429.6,161.5L429.1,162.3L428.2,161.5L427.9,160.8ZM432.4,158.2L433.2,158.3L433.5,157.8L434.5,157.1L435.5,158.1L436.4,159.3L437.2,159.4L437.7,159.8L436.3,160L436,161.3L435.7,162L435,162.4L435.1,163.2L434.6,163.3L433.5,162.4L434.2,161.5L433.6,161L433,161.2L430.9,162.4L430.9,161.2L430.1,160.9L429.4,160.5L429.8,159.9L428.9,159.3L429.3,158.9L428.6,158.6L428.2,158.1L428.7,157.8L430,158.3L430.9,158.4L431.2,158.2L430.3,157.3L430.7,157L431.2,157.1Z"/>
<path d="M417.4,171.9L414,173.7L412.1,173L412,173L412.3,172.8L412.2,172L412.7,171.1L413.6,170.4L413.3,169.8L412.6,169.7L412.4,168.3L412.8,167.6L413.3,167.2L413.8,166.8L413.9,165.9L414.4,166.2L416.4,165.7L417.3,166L418.7,166L420.7,165.4L421.7,165.4L423.7,165.1L422.8,166.2L421.8,166.7L422,167.9L421.3,170.1Z"/>
<path d="M411.8,173.6L411.8,174.7L411.5,175.2L410.7,175.4L410.8,174.9L411.2,174.7L410.8,174.5L411.1,173.4Z"/>
<path d="M492.6,217.1L492.3,218.9L491.6,219.4L490.1,219.8L489.2,218.4L488.9,215.9L489.7,213L490.9,214L491.7,215.2Z"/>
<path d="M530.5,211.6L529.8,210.7L528.9,208.9L528.5,206.8L529.6,205.3L531.9,205L533.5,205.3L535,205.9L535.8,204.7L537.3,205.4L537.7,206.5L537.5,208.6L534.6,210L535.3,211L533.5,211.2L532,211.9Z"/>
<path d="M503,144L504.8,143.8L508.2,142.2L510.8,141.4L512.3,142L514.2,142L515.3,142.8L517.1,142.9L519.6,143.3L521.3,142.1L520.6,141.1L522.4,139.2L524.4,140L526,140.2L528,140.6L528.3,141.9L530.8,142.7L532.5,142.3L534.7,142.1L536.4,142.4L538.2,143.2L539.2,144.1L540.8,144.1L543,144.3L544.6,143.9L546.9,143.6L549.5,142.4L550.5,142.6L551.5,143.2L553.5,143L552.7,144.3L551.5,146.1L551.9,146.8L552.9,146.6L554.6,146.8L556,146.2L557.4,146.8L558.9,148L558.8,148.6L557.4,148.4L554.8,148.6L553.6,149.1L552.3,150.3L549.7,151L547.9,151.9L546.1,151.5L545.1,151.4L544.2,152.5L544.8,153.2L545.1,153.8L543.8,154.3L542.6,155.3L540.5,155.9L537.9,156L535.1,156.6L533.1,157.5L532.3,157L530.2,157L527.6,155.9L525.9,155.7L523.6,155.9L519.9,155.5L518,155.5L517,154.5L516.2,152.9L515.1,152.7L513,151.6L510.6,151.4L508.6,151.1L508,150.3L508.6,148.3L507.4,146.9L504.9,146.2L503.4,145.3Z"/>
</g>
<g fill="#c6e3c6">
<path d="M204.7,215.8L203.7,215.4L203.4,215.1L203.6,214.8L203.5,214.4L203,214L202.3,213.6L201.7,213.4L201.6,212.9L201.1,212.6L201.3,213.1L200.9,213.5L200.5,213L200,212.8L199.7,212.5L199.7,212L200,211.4L199.5,211.2L199.9,210.8L200.1,210.6L201.3,211.1L201.7,210.8L202.2,211L202.5,211.3L203,211.4L203.5,211.1L203.9,212L204.6,212.7L205.4,213.5L204.7,213.6L204.7,214.4L205.1,214.6L204.8,214.8L204.9,215.1L204.8,215.5Z"/>
<path d="M225,209.6L224.9,210L223.9,210.2L224.5,211L224.5,211.9L223.7,213L224.4,214.4L225.1,214.2L225.5,213L225,212.4L224.9,211L227,210.3L226.8,209.5L227.4,209L228.1,210.2L229.3,210.2L230.4,211.2L230.5,211.8L232,211.8L233.9,211.6L234.9,212.4L236.3,212.6L237.2,212L237.3,211.6L239.4,211.5L241.5,211.5L240,212L240.6,212.8L242,213L243.3,213.8L243.6,215.2L244.5,215.2L245.2,215.6L243.8,216.6L243.7,217.2L244.3,217.9L243.9,218.2L242.8,218.5L242.8,219.3L242.3,219.8L243.5,221.1L243.8,221.6L243.1,222.3L241.1,222.9L239.9,223.2L239.4,223.6L238,223.2L236.7,222.9L236.4,223.1L237.2,223.6L237.1,224.7L237.3,225.8L238.8,226L238.9,226.4L237.7,226.8L237.5,227.6L236.7,227.9L235.5,228.3L235.1,228.8L233.7,228.9L232.8,228L232.3,226.3L231.8,225.7L231.2,225.3L232,224.4L232,224L231.5,223.5L231.1,222.3L231.3,221.1L231.7,220.5L232,219.5L231.3,219.2L230.3,219.5L229.1,219.3L228.4,219.5L227.2,218L226.2,217.8L223.9,218L223.5,217.4L223.1,217.2L223,216.9L223.2,216.2L223.1,215.5L222.7,215.1L222.4,214.3L221.6,214.2L222,213.2L222.2,211.9L222.8,211.3L223.4,210.8L223.9,209.9Z"/>
<path d="M209.3,236.1L210.3,234.8L209.9,234.1L209.2,234.9L208.2,234.1L208.5,233.6L208.2,232.1L208.8,231.8L209.2,230.7L209.8,229.6L209.7,228.9L210.7,228.5L211.8,227.8L213.6,228.8L213.9,228.7L214.4,229.5L215.8,229.7L216.3,229.5L217.2,230.1L217.9,230.5L218.2,231.8L217.6,232.9L215.7,234.8L213.6,235.4L212.6,237L212.2,238.2L211.2,238.9L210.5,238L209.8,237.8L209.1,237.9L209,237.3L209.5,236.9Z"/>
<path d="M228,260.9L227.6,261.8L226.7,262.3L224.9,261.3L224.8,260.5L221.3,258.8L218.2,256.9L216.8,255.8L216.1,254.4L216.4,253.9L214.9,251.6L213.2,248.3L211.5,244.9L210.8,244.1L210.3,242.8L208.9,241.6L207.7,240.9L208.2,240.1L207.4,238.5L207.9,237.3L209.3,236.1L209.5,236.9L209,237.3L209.1,237.9L209.8,237.8L210.5,238L211.2,238.9L212.2,238.2L212.6,237L213.6,235.4L215.7,234.8L217.6,232.9L218.2,231.8L217.9,230.5L218.4,230.3L219.6,231.1L220.1,231.9L220.9,232.4L222,234.2L223.3,234.4L224.2,234L224.9,234.3L225.9,234.1L227.2,235L226.1,236.7L226.6,236.8L227.5,237.7L225.9,237.6L225.7,237.9L224.3,238.2L222.3,239.4L222.2,240.2L221.7,240.8L221.9,241.8L220.8,242.3L220.8,243L220.4,243.3L221.1,244.9L222,246L221.7,246.7L222.9,246.8L223.5,247.8L225.1,247.8L226.5,246.8L226.4,249.4L227.2,249.6L228.1,249.3L229.6,252.1L229.3,252.7L229.2,254L229.2,255.5L228.5,256.3L228.8,257L228.4,257.6L229.1,259L228,260.9Z"/>
<path d="M228.1,249.3L229.4,249.5L230.3,249.4L230.7,248.9L232.3,248.2L233.2,247.6L235.5,247.3L235.3,248.6L235.5,249.2L235.4,250.4L237.3,252L239.2,252.3L239.9,252.9L241.1,253.3L241.8,253.8L242.9,253.8L243.9,254.3L244,255.3L244.3,255.8L244.4,256.6L243.9,256.6L244.5,258.6L247.9,258.7L247.6,259.7L247.8,260.4L248.8,260.9L249.2,262L248.9,263.3L248.4,264.1L248.6,265.1L248,265.5L248,264.9L246.3,264L244.7,264L241.7,264.5L240.8,266L240.8,267L240.1,269.1L239.8,268.7L237.8,268.6L237.1,270L236.1,268.8L233.8,268.3L232.4,269.9L231.1,270.2L230.4,267.8L229.5,265.8L230.1,264.1L229.1,263.4L228.9,262.1L228,260.9L229.1,259L228.4,257.6L228.8,257L228.5,256.3L229.2,255.5L229.2,254L229.3,252.7L229.6,252.1Z"/>
<path d="M248.9,283L250.1,282.8L251.8,284.2L252.5,284.1L254.3,285.2L255.7,286.2L256.7,287.4L255.9,288.2L256.4,289.2L255.6,290.3L253.6,291.3L252.4,290.9L251.4,291.1L249.8,290.4L248.6,290.4L247.5,289.5L247.7,288.3L248.1,287.9L248.1,286.2L248.5,284.4Z"/>
<path d="M324.3,114.1L323.9,115.2L325.9,116.4L323.6,117.7L318.6,118.9L317,119.2L314.8,119L309.9,118.4L311.6,117.7L307.8,116.8L310.9,116.5L310.8,115.9L307.1,115.5L308.3,114.4L311,114.1L313.7,115.3L316.3,114.4L318.5,114.9L321.4,113.9Z"/>
<path d="M386.5,132.3L386.5,131L387.4,129.9L389,129.3L390.4,130.6L391.8,130.5L392.1,129.2L393.6,128.9L394.4,129.1L395.9,129.8L397.3,129.8L398.2,130.2L398.3,131L398.9,132L397,132.7L395.9,133L394.3,132.2L393.3,132.1L393.1,131.7L391.4,131.9L388.4,131.7Z"/>
<path d="M382.9,151.8L383.5,151.8L383.1,152.6L383.9,153.2L383.6,154.1L383.2,154.1L382.9,154.3L382.3,154.7L382.1,155.7L380.5,155L379.9,154.3L379.2,153.9L378.4,153.2L378,152.7L377.2,151.9L377.5,151.2L378.2,151.6L378.5,151.2L379.4,151.2L380.9,151.4L382.1,151.4Z"/>
<path d="M385.6,157L385.9,157.1L385.9,156.7L387,156.4L387.4,156.4L388,156.3L388.8,156.2L389.6,156.8L389.8,158L389.4,158L389.1,158.3L388.2,158.3L387.5,158.7L386.4,158.8L385.7,158.4L385.4,157.6Z"/>
<path d="M390.7,136L392.4,136L394.3,135.3L394.7,134.3L396.1,133.8L395.9,133L397,132.7L398.9,132L400.7,132.5L401,132.9L401.9,132.7L403.6,133.1L403.8,133.9L403.4,134.4L404.5,135.6L405.2,135.9L405.1,136.2L406.3,136.5L406.8,137L406.1,137.4L404.7,137.3L404.4,137.5L404.8,138L405.2,139.2L403.7,139.3L403.2,139.6L403.1,140.5L402.4,140.3L400.8,140.4L400.3,140L399.7,140.3L399,140.1L397.6,140L395.7,139.6L393.9,139.5L392.6,139.5L391.6,140L390.8,140.1L390.7,139.3L390.2,138.5L391.2,138.1L391.2,137.4L390.8,136.8Z"/>
<path d="M405.2,139.2L405.8,139.2L406.3,138.8L406.8,138.9L408.6,138.7L409.7,139.7L409.3,140.1L409.4,140.6L410.8,140.7L411.5,141.5L411.4,141.8L413.7,142.4L415,142.2L416.1,143L417.1,142.9L419.7,143.5L419.7,144L419,145L419.4,145.9L419.1,146.5L417.4,146.6L416.5,147.1L416.4,147.9L415.1,148L413.9,148.6L412.2,148.7L410.7,149.3L410.8,150.4L411.7,150.8L413.5,150.7L413.1,151.4L411.2,151.7L408.9,152.7L407.9,152.3L408.3,151.5L406.4,151L406.7,150.7L408.3,150.1L407.8,149.7L405.1,149.2L405,148.6L403.4,148.8L402.7,149.8L401.4,151.1L400.6,150.8L399.8,151L399,150.7L399.4,150.5L399.7,149.9L400.2,149.4L400.1,149L400.4,148.9L400.6,149.2L401.7,149.2L402.1,149.1L401.8,148.9L401.9,148.6L401.3,148.2L401.1,147.5L400.4,147.2L400.5,146.6L399.8,146.1L399,146L397.7,145.5L396.6,145.7L396.2,145.9L395.4,145.9L395,146.3L393.7,146.5L393.1,146.8L392.3,146.4L391.2,146.3L390.1,146.1L389.3,146.5L389.2,146.1L388.3,145.6L388.6,144.9L389.1,144.4L389.5,144.5L389,143.7L390.6,142.3L391.5,142.1L391.6,141.6L390.8,140.1L391.6,140L392.6,139.5L393.9,139.5L395.7,139.6L397.6,140L399,140.1L399.7,140.3L400.3,140L400.8,140.4L402.4,140.3L403.1,140.5L403.2,139.6L403.7,139.3Z"/>
<path d="M340.6,167.7L341.6,168.5L343.3,168.3L345.1,168.7L345.9,168.7L346.5,169.9L346.6,170.9L347.2,172.8L347.7,173.1L347.4,173.8L345.1,174.1L344.3,174.8L343.3,174.9L343.2,176.2L341.2,176.9L340.5,177.8L339.1,178.2L337.3,178.5L334.5,179.8L334.5,181.9L334.2,181.9L334.3,182.8L333.2,182.9L332.6,183.3L331.8,183.3L331.2,183L329.7,183.2L329.2,184.6L328.6,184.7L327.8,186.9L325.4,188.8L324.8,191.2L324.1,192L323.9,192.6L319.9,192.8L320,191.9L320.7,191.5L321.2,190.6L321.1,190L321.7,188.7L322.7,187.6L323.3,187.4L323.8,186.3L323.8,185.4L324.4,184.3L325.6,183.7L326.7,181.9L327.6,181.2L329.2,181L330.6,179.8L331.5,179.3L332.9,177.9L332.5,175.7L333.2,174.2L333.4,173.3L334.5,172.1L336.3,171.3L337.6,170.6L338.7,168.8L339.3,167.7Z"/>
<path d="M370.6,189.2L364.6,192.5L359.6,195.9L357.1,196.7L355.2,196.9L355.2,195.8L354.3,195.5L353.2,195L352.8,194.2L346.9,190.4L341.1,186.6L334.5,182.3L334.5,181.9L334.5,179.8L337.3,178.5L339.1,178.2L340.5,177.8L341.2,176.9L343.2,176.2L343.3,174.9L344.3,174.8L345.1,174.1L347.4,173.8L347.7,173.1L347.2,172.8L346.6,170.9L346.5,169.9L345.9,168.7L347.5,167.8L349.4,167.5L350.5,166.8L352.2,166.2L355.2,165.9L358.1,165.8L358.9,166L360.6,165.4L362.5,165.3L363.2,165.7L364.4,165.6L364,166.5L364.3,168.2L363.9,169.6L362.8,170.6L362.9,171.9L364.4,173L364.4,173.4L365.5,174.1L366.2,177.2L366.8,178.8L366.9,179.6L366.6,181L366.7,181.8L366.5,182.8L366.6,183.9L365.9,184.6L367,185.9L367,186.6L367.6,187.6L368.5,187.3L369.9,188.1Z"/>
<path d="M366.2,177.2L365.5,174.1L364.4,173.4L364.4,173L362.9,171.9L362.8,170.6L363.9,169.6L364.3,168.2L364,166.5L364.4,165.6L366.3,164.9L367.5,165.1L367.4,166L368.9,165.4L369,165.7L368.2,166.6L368.2,167.4L368.8,167.8L368.5,169.3L367.4,170.2L367.7,171.2L368.6,171.2L369.1,172L369.7,172.3L369.6,173.6L368.8,174.1L368.2,174.7L367,175.4L367.2,176.1L367.1,176.8Z"/>
<path d="M393.3,191.8L393.3,195.2L391.3,195.2L391.3,196L384.3,192.6L377.4,189.3L375.6,190.3L374.4,190.9L373.4,189.9L370.6,189.2L369.9,188.1L368.5,187.3L367.6,187.6L367,186.6L367,185.9L365.9,184.6L366.6,183.9L366.5,182.8L366.7,181.8L366.6,181L366.9,179.6L366.8,178.8L366.2,177.2L367.1,176.8L367.2,176.1L367,175.4L368.2,174.7L368.8,174.1L369.6,173.6L369.7,172.3L371.8,172.9L372.5,172.7L374,173L376.3,173.8L377.1,175.4L378.7,175.7L381.1,176.4L383,177.3L383.8,176.8L384.7,176L384.3,174.7L384.8,173.9L386.1,173L387.3,172.8L389.7,173.2L390.3,173.9L390.9,173.9L391.5,174.2L393.2,174.5L393.6,175L393,175.9L393.3,176.6L392.8,177.7L393.3,179.1Z"/>
<path d="M334.5,181.9L334.5,182.3L334.5,185L328.7,184.9L328.8,189.4L327.2,189.5L326.7,190.4L327.1,192.9L320.2,192.9L319.8,193.5L319.9,192.8L323.9,192.6L324.1,192L324.8,191.2L325.4,188.8L327.8,186.9L328.6,184.7L329.2,184.6L329.7,183.2L331.2,183L331.8,183.3L332.6,183.3L333.2,182.9L334.3,182.8L334.2,181.9Z"/>
<path d="M320.4,206.5L319.7,205.1L318.8,204.5L319.6,204.1L320.5,202.9L320.9,202L321.5,201.4L322.4,201.6L323.2,201.2L324.2,201.2L325,201.7L326.2,202.2L327.2,203.5L328.4,204.7L328.5,205.8L328.8,206.7L329.5,207.2L329.6,207.9L329.5,208.5L329.3,208.5L328.3,208.4L328.2,208.6L327.8,208.7L326.5,208.2L325.7,208.2L322.5,208.1L322,208.3L321.4,208.3L320.5,208.6L320.2,207.2L321.8,207.3L322.2,207L322.5,207L323.2,206.6L323.9,207L324.7,207L325.5,206.6L325.1,206.1L324.5,206.4L324,206.4L323.3,205.9L322.7,206L322.4,206.4L320.4,206.5Z"/>
<path d="M344.7,221.5L343.9,221.5L342.6,221.1L341.5,221.2L339.5,221.5L338.2,222L336.5,222.6L336.2,222.6L336.3,221.1L336.5,220.9L336.4,220.2L335.7,219.5L335.1,219.4L334.6,218.9L335,218.1L334.8,217.3L334.9,216.8L335.2,216.8L335.3,216L335.1,215.7L335.3,215.4L336,215.2L335.5,213.8L335.1,213.1L335.3,212.5L335.6,212.4L335.8,212.2L336.3,212.5L337.7,212.5L338,212L338.3,212L338.8,211.8L339.1,212.6L339.5,212.3L340.2,212.1L341,212.5L341.3,213L342.1,213.4L342.7,213L343.5,212.9L344.7,213.4L345.2,215.8L344.4,217.3L344,219.3L344.7,220.8Z"/>
<path d="M344.7,213.4L343.5,212.9L342.7,213L342.1,213.4L341.3,213L341,212.5L340.2,212.1L340.1,211.1L340.6,210.3L340.5,209.7L341.9,208.3L342.2,207.1L342.6,206.7L343.5,206.9L344.2,206.5L344.5,206.1L345.8,205.3L346.2,204.8L347.8,204L348.7,203.8L349.2,204.1L350.3,204.1L350.2,205L350.4,205.8L351.4,206.9L351.4,207.7L353.5,208.1L353.4,209.3L353,209.9L352.2,210L351.8,210.8L351.2,211L349.7,210.9L348.9,210.8L348.3,211.1L347.6,211L344.5,211L344.5,212Z"/>
<path d="M351.5,219.8L348.8,220.9L347.8,221.5L346.2,222L344.7,221.5L344.7,220.8L344,219.3L344.4,217.3L345.2,215.8L344.7,213.4L344.5,212L344.5,211L347.6,211L348.3,211.1L348.9,210.8L349.7,210.9L349.6,211.5L350.3,212.4L350.3,213.7L350.5,215L350.9,215.7L350.5,217.3L350.6,218.1L351.1,219.2Z"/>
<path d="M352.9,219.5L351.5,219.8L351.1,219.2L350.6,218.1L350.5,217.3L350.9,215.7L350.5,215L350.3,213.7L350.3,212.4L349.6,211.5L349.7,210.9L351.2,211L351,211.9L352.1,213L352.2,213.9L352.6,214.2L352.5,218.3Z"/>
<path d="M354.4,219.3L352.9,219.5L352.5,218.3L352.6,214.2L352.2,213.9L352.1,213L351,211.9L351.2,211L351.8,210.8L352.2,210L353,209.9L353.4,209.3L354,208.8L354.6,208.8L356,209.8L355.9,210.4L356.3,211.4L355.9,212.1L356.1,212.6L355.3,213.7L354.7,214.2L354.4,215.3L354.5,216.4Z"/>
<path d="M372.5,226.2L372.3,226.1L371.2,226.4L370.2,226.1L369.4,226.3L366.5,226.2L366.8,224.8L366.1,223.7L365.3,223.4L364.9,222.6L364.5,222.3L364.5,221.9L365,220.6L365.8,218.9L366.3,218.9L367.3,217.9L368,217.9L369,218.6L370.2,218L370.3,217.3L370.7,216.6L371,215.7L371.9,215L372.3,213.7L372.7,213.4L372.9,212.4L373.4,211.3L374.8,210L374.9,209.4L375.1,209.1L374.4,208.4L374.5,207.8L375,207.7L375.7,208.8L375.8,210L375.7,211.2L376.7,212.8L375.7,212.7L375.2,212.9L374.4,212.7L374,213.5L375.1,214.5L375.8,214.8L376.1,215.6L376.6,216.8L376.4,217.2L375.5,219L375.1,219.3L374.9,220.7L375.1,221.4L375,221.9L375.8,222.8L375.9,223.5L376.6,224.4L377.4,224.9L377.5,225.7L377.6,226.2L377.5,227.2L376.1,226.8L374.7,226.3L372.5,226.2Z"/>
<path d="M403.5,224.1L403.4,226.1L404.1,226.4L403.6,227L402.9,227.4L402.2,228.3L401.9,229.2L401.8,230.6L401.4,231.2L401.3,232.5L400.8,233L400.8,234.1L400.5,234.2L400.4,235.2L400.8,235.9L400.9,238.1L401.2,239.7L401.1,240.6L401.4,241.6L402.4,242.6L403.4,244.8L402.7,244.6L400.3,244.9L399.9,245.1L399.4,246.2L399.8,247L399.5,249.1L399.2,250.8L399.7,251.1L400.9,251.8L401.4,251.5L401.6,253.4L400.2,253.4L399.5,252.4L398.9,251.6L397.5,251.4L397.1,250.5L396,251L394.6,250.8L394.1,250L393,249.8L392.1,249.9L392,249.3L391.4,249.3L390.6,249.2L389.6,249.5L388.8,249.4L388.4,249.6L388.5,247.5L387.9,246.8L387.7,245.8L388,244.7L387.7,244L387.6,242.9L385.5,243L385.6,242.3L384.8,242.3L384.7,242.6L383.6,242.7L383.1,243.7L382.9,244.2L381.9,243.9L381.3,244.2L380.2,244.3L379.5,243.4L379.1,242.8L378.6,241.8L378.2,240.5L373,240.4L372.4,240.7L371.9,240.6L371.2,240.9L370.9,240.3L371.4,240.1L371.4,239.4L371.7,238.9L372.4,238.6L372.8,238.7L373.4,238.1L374.4,238.1L374.5,238.6L375.1,238.9L376.2,237.8L377.2,236.9L377.6,236.4L377.6,234.9L378.3,233.2L379.1,232.3L380.3,231.5L380.5,230.9L380.5,230.3L380.8,229.7L380.7,228.7L380.9,227.2L381.3,226.1L381.8,225.1L381.9,224.1L382,222.9L382.7,222L383.7,221.4L385.1,222L386.2,222.7L387.5,222.8L388.8,223.2L389.3,222.1L389.6,222L390.4,222.1L392.3,221.3L393,221.6L393.6,221.6L393.8,221.2L394.5,221L395.8,221.2L396.9,221.2L397.5,221.1L398.5,222.5L399.3,222.7L399.8,222.4L400.6,222.5L401.6,222.2L402,222.9L403.5,224.1Z"/>
<path d="M394.5,262.6L394.8,262.9L395.4,263.9L397.4,265.8L398.1,266L398.1,266.6L398.6,267.8L400,268L401.1,268.8L398.6,270.1L397,271.4L396.5,272.6L395.9,273.2L395,273.4L394.7,274.2L394.5,274.7L393.4,275.1L392,275.1L391.1,274.6L390.4,274.4L389.5,274.8L389.1,275.6L388.3,276.1L387.4,276.9L386.2,277.1L385.8,276.5L385.9,275.4L384.9,273.7L384.4,273.5L384.4,268.4L386.1,268.3L386.2,262.1L387.5,262L390.2,261.4L390.9,262.1L392,261.5L392.5,261.5L393.5,261.1L393.8,261.2Z"/>
<path d="M404.2,269.1L403.2,268.9L402.6,269.1L401.8,268.8L401.1,268.8L400,268L398.6,267.8L398.1,266.6L398.1,266L397.4,265.8L395.4,263.9L394.8,262.9L394.5,262.6L393.8,261.2L395.7,261.4L396.3,261.6L396.9,261.6L397.9,260.4L399.4,259L400,258.8L400.2,258.2L401.2,257.5L402.5,257.3L402.7,258L404.1,257.9L404.9,258.3L405.3,258.7L406.1,258.8L407.1,259.4L407.1,261.6L406.7,262.8L406.6,264.1L406.9,264.7L406.7,265.7L406.5,265.8L406,267.1Z"/>
<path d="M406.9,246.3L407.7,247.1L408.2,248.6L407.9,249.1L407.5,250.5L407.9,251.9L407.3,252.5L406.8,254.2L407.7,254.6L402.4,256.1L402.5,257.3L401.2,257.5L400.2,258.2L400,258.8L399.4,259L397.9,260.4L396.9,261.6L396.3,261.6L395.7,261.4L393.8,261.2L393.5,261.1L393.5,260.9L392.8,260.5L391.6,260.4L390.2,260.8L389.1,259.7L387.9,258.3L388,252.7L391.6,252.8L391.5,252.2L391.7,251.5L391.4,250.7L391.6,249.8L391.4,249.3L392,249.3L392.1,249.9L393,249.8L394.1,250L394.6,250.8L396,251L397.1,250.5L397.5,251.4L398.9,251.6L399.5,252.4L400.2,253.4L401.6,253.4L401.4,251.5L400.9,251.8L399.7,251.1L399.2,250.8L399.5,249.1L399.8,247L399.4,246.2L399.9,245.1L400.3,244.9L402.7,244.6L403.4,244.8L404.1,245.2L404.8,245.5L405.9,245.8Z"/>
<path d="M410,250.3L409.6,251.7L410,253.9L410.7,253.9L411.3,254.5L412,255.7L412.2,258L411.4,258.4L410.9,259.6L409.7,258.5L409.6,257.3L410,256.4L409.9,255.7L409.2,255.3L408.7,255.5L407.7,254.6L406.8,254.2L407.3,252.5L407.9,251.9L407.5,250.5L407.9,249.1L408.2,248.6L407.7,247.1L406.9,246.3L408.6,246.7L409,247.1L409.6,248Z"/>
<path d="M410,250.3L411.4,250.2L413.5,250.7L413.9,250.5L415.1,250.4L415.8,249.9L416.8,249.9L418.7,249.2L420.1,248.2L420.4,249L420.3,250.8L420.5,252.3L420.6,255L420.9,255.9L420.4,257.1L419.7,258.3L418.6,259.4L417,260.1L415,260.9L413,262.8L412.4,263.1L411.2,264.4L410.4,264.8L410.3,266L411.1,267.3L411.5,268.4L411.5,268.9L411.8,268.8L411.7,270.5L411.5,271.3L411.9,271.6L411.6,272.3L410.9,273L409.4,273.6L407.3,274.5L406.6,275.2L406.7,275.9L407.2,276L407,276.9L405.7,276.9L405.6,276.1L405.3,275.4L405.1,274.7L405.4,272.8L405,271.5L404.2,269.1L406,267.1L406.5,265.8L406.7,265.7L406.9,264.7L406.6,264.1L406.7,262.8L407.1,261.6L407.1,259.4L406.1,258.8L405.3,258.7L404.9,258.3L404.1,257.9L402.7,258L402.5,257.3L402.4,256.1L407.7,254.6L408.7,255.5L409.2,255.3L409.9,255.7L410,256.4L409.6,257.3L409.7,258.5L410.9,259.6L411.4,258.4L412.2,258L412,255.7L411.3,254.5L410.7,253.9L410,253.9L409.6,251.7Z"/>
<path d="M408.9,231.9L409.2,232.1L415.5,235.6L415.7,236.6L418.2,238.4L417.3,240.5L417.5,241.5L418.6,242.2L418.6,242.6L418.1,243.7L418.2,244.2L418.1,245L418.7,246.1L419.5,247.8L420.1,248.2L418.7,249.2L416.8,249.9L415.8,249.9L415.1,250.4L413.9,250.5L413.5,250.7L411.4,250.2L410,250.3L409.6,248L409,247.1L408.6,246.7L406.9,246.3L405.9,245.8L404.8,245.5L404.1,245.2L403.4,244.8L402.4,242.6L401.4,241.6L401.1,240.6L401.2,239.7L400.9,238.1L401.6,238L402.3,237.3L403,236.4L403.4,236.1L403.4,235.5L403,235.1L402.9,234.4L403.4,234.2L403.5,233.2L402.8,232.2L403.4,232L405.3,232Z"/>
<path d="M405.3,232L403.4,232L402.8,232.2L402.2,232L401.8,232.7L401.3,232.5L401.4,231.2L401.8,230.6L401.9,229.2L402.2,228.3L402.9,227.4L403.6,227L404.1,226.4L403.4,226.1L403.5,224.1L404.3,223.6L405.4,224L406.8,223.6L408,223.6L409.1,222.8L409.9,224L410.1,224.9L410.9,226.9L410.2,228.1L409.4,229.3L408.9,230L408.9,231.9Z"/>
<path d="M418.2,238.4L415.7,236.6L415.5,235.6L409.2,232.1L408.9,231.9L408.9,230L409.4,229.3L410.2,228.1L410.9,226.9L410.1,224.9L409.9,224L409.1,222.8L410.1,221.7L411.3,220.6L412.2,220.9L412.2,221.8L412.8,222.4L414.1,222.4L416.3,223.9L416.8,223.9L417.2,223.9L417.6,224.1L418.8,224.2L419.3,223.5L420.9,222.8L421.6,223.3L422.8,223.3L421.3,225.3L421.3,231.7L422.3,233.1L421.1,233.8L420.7,234.6L420,234.7L419.8,235.9L419.2,236.6L418.9,237.8Z"/>
<path d="M433.2,216.2L428.2,221.5L425.9,221.5L424.4,222.8L423.3,222.8L422.8,223.3L421.6,223.3L420.9,222.8L419.3,223.5L418.8,224.2L417.6,224.1L417.2,223.9L416.8,223.9L416.3,223.9L414.1,222.4L412.8,222.4L412.2,221.8L412.2,220.9L411.3,220.6L410.3,218.7L409.5,218.3L409.2,217.6L408.3,216.7L407.2,216.6L407.8,215.6L408.8,215.6L409,215L409,213.5L409.5,211.6L410.3,211.1L410.5,210.4L411.3,209.1L412.3,208.2L413,206.5L413.3,205L415.3,205.4L415.9,204.1L416.9,204.8L418,204.4L418.4,204.8L419.6,204.8L421.1,205.5L421.6,206.1L422.3,206.7L423.1,207.7L423.7,208.3L423,209.1L422.5,209.9L422.6,210.3L422.6,210.9L423.6,210.9L424,210.8L424.4,211.1L424,211.7L424.7,212.7L425.3,213.5L426,214.2L431.7,216.2Z"/>
<path d="M388,208.2L388.2,207.6L388.6,206.9L388.6,206.8L388.4,206.1L388.9,205.6L389,205.6L389,205.5L388.6,205.2L389.1,204.1L389.9,202.8L391.3,202.9L391.4,202.9L391.3,196L391.3,195.3L391.3,195.2L393.3,195.2L393.3,191.8L414.1,191.8L414.6,193.5L414.3,193.8L414.5,195.6L415.1,197.7L415.2,197.7L415.8,198.1L416.8,198.7L415.9,199.7L414.6,200L414.1,200.5L414.1,200.6L414,200.6L413.9,201.7L413.1,204.3L413.3,205L413,206.5L412.3,208.2L411.3,209.1L410.5,210.4L410.3,211.1L409.5,211.6L409,213.5L409,213.7L409,215L408.8,215.6L407.9,215.6L407.8,215.6L407.3,216.5L407.3,216.6L408.3,216.7L409.2,217.6L409.5,218.2L409.5,218.3L410.3,218.7L411.3,220.6L410.1,221.7L409.1,222.8L408,223.6L406.8,223.6L405.4,224L404.3,223.6L404.2,223.6L403.5,224.1L402,222.9L401.6,222.2L401.5,222.2L400.6,222.5L399.8,222.4L399.3,222.7L398.5,222.5L397.5,221.1L397.2,220.5L395.9,219.8L395.5,218.8L395.4,218.8L395.4,218.7L394.7,218L393.5,217.1L393.5,216.5L392.6,215.8L391.4,215.1L391.3,215L390.6,214.6L390.5,214L390.8,213.3L390.8,212.6L389.8,211.5L389.6,210.7L389.6,210.3L389,209.8L389,208.8L388.6,208.1L388,208.2Z"/>
<path d="M411.8,173.6L412.1,173L414,173.7L417.4,171.9L418.2,174L417.8,174.3L414.3,175.1L416.1,176.9L415.5,177.2L415.2,177.8L413.9,178L413.4,178.6L412.7,179.2L410.7,178.9L410.7,178.6L411.5,175.9L411.5,175.2L411.8,174.7Z"/>
<path d="M429,167.3L430.2,167.8L430.3,168.9L429.4,169.5L429,170.8L430.2,172.5L432.4,173.5L433.3,174.8L433,176.1L433.5,176L433.5,177L434.5,177.9L433.5,177.8L432.3,177.7L431,179.3L427.8,179.2L422.9,175.7L420.2,174.5L418.2,174L417.4,171.9L421.3,170.1L422,167.9L421.8,166.7L422.8,166.2L423.7,165.1L424.4,164.9L426.4,165.1L427,165.5L427.9,165.2L429,167.3Z"/>
<path d="M433.5,177.8L433.8,178.6L433.7,179L434.3,180.3L433,180.3L432.6,179.5L431,179.3L432.3,177.7Z"/>
<path d="M442.5,201.1L441.2,201.6L440.9,202.3L440.8,202.9L439.1,203.7L436.3,204.5L434.7,205.7L433.9,205.8L433.4,205.7L432.4,206.5L431.3,206.8L429.8,206.9L429.4,207L429,207.4L428.5,207.6L428.3,208L427.4,208L426.9,208.2L425.6,208.1L425.2,207.1L425.2,206.1L424.9,205.6L424.6,204.3L424.1,203.6L424.5,203.5L424.3,202.7L424.5,202.4L424.4,201.6L425.2,201.1L425,200.3L425.5,199.5L426.2,199.9L426.6,199.8L428.7,199.7L429,199.9L430.7,200.1L431.3,200L431.8,200.6L432.6,200.3L433.8,198.4L435.5,197.7L440.5,197L441.9,199.9Z"/>
<path d="M452.5,193.3L451.9,194.5L451.1,194.4L450.7,194.8L450.4,195.7L450.6,196.9L450.5,197.1L449.7,197.1L448.6,197.7L448.4,198.6L448,199L446.9,199L446.2,199.4L446.2,200.1L445.4,200.6L444.4,200.4L443.3,201L442.5,201.1L441.9,199.9L440.5,197L445.8,195.2L446.9,191.8L446.1,190.5L446.2,189.8L446.7,189.1L446.7,188.4L447.5,188L447.2,187.8L447.3,186.7L448.2,186.7L449,187.8L450,188.5L451.2,188.7L452.3,189L453.1,190L453.5,190.6L454.2,190.8L454.2,191.2L453.5,192.3L453.2,192.8ZM448,185.3L447.6,184.7L448.1,184.1L448.4,184.2L448.2,184.9Z"/>
<path d="M503.6,181.5L503.5,182.2L503.7,183.3L503.5,184L502.1,184.1L500,183.7L498.6,183.5L497.6,182.6L495.2,182.4L492.9,181.4L491.3,180.5L489.6,179.9L490.3,178.2L491.4,177.5L492.1,177L493.5,177.6L495.3,178.7L496.3,179L496.8,179.8L498.2,180.2L499.6,180.9L501.6,181.3Z"/>
<path d="M533.5,205.3L534.1,204.5L534.2,203L532.8,201.5L532.6,199.7L531.3,198.3L530,198.2L529.6,198.8L528.6,198.9L528.1,198.6L526.3,199.6L526.2,198L526.6,196.2L525.5,196.1L525.4,195.1L524.6,194.5L525,193.9L526.5,192.7L526.6,193.2L527.5,193.2L527.3,191.2L528.2,191L529.2,192.3L530,193.9L532.2,193.9L532.8,195.4L531.7,195.9L531.2,196.5L533.3,197.6L534.8,199.6L535.9,201.2L537.2,202.4L537.6,203.6L537.3,205.4L535.8,204.7L535,205.9L533.5,205.3Z"/>
<path d="M538.5,192.5L536.1,194L534.7,195.7L534.3,196.9L535.6,198.7L537.3,201L538.9,202.1L539.9,203.5L540.7,206.7L540.5,209.8L539,211L537,212.1L535.6,213.5L533.4,215.2L532.8,214.1L533.3,212.9L532,211.9L533.5,211.2L535.3,211L534.6,210L537.5,208.6L537.7,206.5L537.3,205.4L537.6,203.6L537.2,202.4L535.9,201.2L534.8,199.6L533.3,197.6L531.2,196.5L531.7,195.9L532.8,195.4L532.2,193.9L530,193.9L529.2,192.3L528.2,191L529.1,190.5L530.5,190.5L532.2,190.3L533.7,189.4L534.6,190L536.2,190.4L535.9,191.4L536.7,192.1Z"/>
<path d="M549.2,222.3L549.9,221.6L551.4,220.7L551.3,221.5L551.2,222.7L550.4,222.6L550,223.2Z"/>
<path d="M570.5,215.5L570.7,216.7L570.8,217.6L570.2,219.2L569.5,217.5L568.7,218.3L569.3,219.6L568.8,220.4L566.7,219.4L566.2,218.2L566.8,217.3L565.7,216.5L565.1,217.2L564.3,217.2L563,218.1L562.7,217.6L563.4,216.2L564.5,215.7L565.4,215L566.1,215.8L567.4,215.3L567.7,214.5L568.9,214.5L568.8,213.1ZM566.3,212.2L565.7,212.8L565.1,213.9L564.6,214.4L563.5,213.2L563.9,212.8L564.3,212.3L564.5,211.2L565.5,211.1L565.2,212.3L566.5,210.6ZM556.7,213.9L554.4,215.6L555.3,214.4L556.5,213.3L557.6,212.1L558.5,210.3L558.8,211.8L557.7,212.7ZM562.6,209.4L563.7,210L564.8,210L564.8,210.7L564,211.4L562.8,212L562.8,211.1L562.9,210.2ZM569,209L569.5,210.9L568.1,210.4L568.1,211L568.6,212.1L567.7,212.5L567.7,211.3L567.1,211.2L566.9,210.1L567.9,210.2L567.9,209.6L566.8,208.3L568.5,208.3ZM562,207.4L561.6,208.9L560.8,208L559.9,206.7L561.4,206.7ZM561.7,197.9L562.7,198.4L563.3,197.9L563.4,198.4L563.1,199.1L563.8,200.3L563.3,201.8L562.3,202.4L562,203.8L562.4,205.2L563.3,205.4L564.1,205.1L566.3,206.1L566.1,207.1L566.7,207.5L566.5,208.3L565.1,207.4L564.5,206.5L564,207.2L562.9,206.1L561.3,206.4L560.5,206L560.5,205.3L561.1,204.8L560.6,204.4L560.3,205L559.5,204L559.2,203.3L559.1,201.6L559.9,202.2L560,199.4L560.6,197.9Z"/>
<path d="M502.3,144.2L501,145.4L499.5,145.5L499.4,147.3L498.5,148.1L495,147.5L493.7,150.6L492.9,151L489.4,151.7L491,154.7L489.8,155.2L489.9,156.2L488.8,155.9L487.9,155.3L485.4,155.1L482.5,155.1L481.8,155.3L479.3,154.5L478.4,154.9L478.1,155.9L475.2,155.3L474.1,155.6L473.7,156.3L472.7,156.7L470.3,157.9L469.6,159.1L468.9,159.1L468.5,158.3L466.2,158.3L465.9,156.8L465,156.8L465.2,155.1L463.1,153.8L460.1,153.9L458,154.2L456.4,152.6L454.9,151.9L452.2,150.7L451.9,150.5L447.4,151.6L447.5,158L446.6,158.1L445.3,156.7L444.2,156.2L442.2,156.6L441.4,157.2L441.3,156.8L441.7,156L441.4,155.4L439.4,154.8L438.6,153.3L437.6,152.8L437.6,152.2L439.3,152.4L439.3,151.1L440.8,150.8L442.3,151.1L442.7,149.4L442.3,148.3L440.6,148.4L439.1,148L437.1,148.7L435.5,149.1L434.6,148.8L434.7,147.9L433.6,146.8L432.3,146.8L430.9,145.6L431.9,144.3L431.3,143.9L432.7,142L434.5,143.1L434.8,141.8L438.4,139.9L441.1,139.8L444.9,141L447,141.7L448.9,141L451.6,141L453.9,141.9L454.4,141.4L456.8,141.4L457.3,140.6L454.4,139.4L456.1,138.5L455.8,138.1L459.7,136.4L463.6,135.2L464.4,134.8L468.8,134.1L470.3,133.4L473.5,133.8L474,135.6L475.9,135.2L478.1,135.8L478,136.7L479.6,136.6L484,135L483.4,135.5L485.6,136.9L489.5,141.3L490.4,140.4L492.9,141.4L495.4,141L496.3,141.3L497.2,142.3L498.4,142.6L499.1,143.4L501.4,143.1Z"/>
<path d="M465.9,164.9L465.9,163.8L463.6,163.1L461.8,162.2L460.7,161.4L458.6,160.2L457.8,158.4L457.2,158.1L455.3,158.2L454.6,157.8L454.5,156.4L452.1,155.5L450.6,156.5L449.1,157.1L449.4,158L447.5,158L447.4,151.6L451.9,150.5L452.2,150.7L454.9,151.9L456.4,152.6L458,154.2L460.1,153.9L463.1,153.8L465.2,155.1L465,156.8L465.9,156.8L466.2,158.3L468.5,158.3L468.9,159.1L469.6,159.1L470.3,157.9L472.7,156.7L473.7,156.3L474.2,156.5L472.7,157.6L474,158.3L475.2,157.9L477.3,158.8L475.1,160L473.7,159.9L473,159.9L472.8,159.4L473.1,158.6L470.8,159L470.2,160.1L469.4,161.1L468,161L467.5,161.8L468.8,162.2L469.2,163.5L468.2,165.3L466.9,164.9Z"/>
<path d="M473.7,156.3L474.1,155.6L475.2,155.3L478.1,155.9L478.4,154.9L479.3,154.5L481.8,155.3L482.5,155.1L485.4,155.1L487.9,155.3L488.8,155.9L489.9,156.2L489.7,156.6L486.9,157.5L486.3,158.2L484,158.4L483.4,159.5L481.5,159.3L480.3,159.7L478.7,160.5L478.9,160.9L478.4,161.3L475.1,161.6L472.9,161L471,161.1L471.2,160.1L473.1,160.4L473.7,159.9L475.1,160L477.3,158.8L475.2,157.9L474,158.3L472.7,157.6L474.2,156.5Z"/>
</g>
<g fill="#9acf99">
<path d="M145,173.3L147,173.2L149.2,173L149,173.4L151.7,174.2L155.6,175.5L160.5,175.4L160.5,174.7L163.5,174.7L164.2,175.3L165.1,175.9L166.1,176.7L166.7,177.6L167.1,178.5L168,179.1L169.5,179.6L170.6,178.2L172,178.2L173.2,178.9L174.1,180L174.7,181.1L175.7,182.1L176.1,183.3L176.6,184.1L178,184.7L179.2,185L179.9,185L179.2,186.5L178.9,187.8L178.8,190.1L178.6,191L178.9,191.9L179.5,192.8L179.8,194.1L181,195.4L181.4,196.4L182.1,197.3L183.9,197.8L184.6,198.5L186.2,198L187.5,197.8L188.8,197.5L189.9,197.2L191,196.5L191.4,195.5L191.6,194L191.9,193.5L193.1,193L194.9,192.6L196.5,192.7L197.5,192.6L197.9,192.9L197.9,193.8L197,194.8L196.5,195.9L196.8,196.2L196.6,196.9L196.1,198.3L195.7,197.8L195.3,197.9L195,197.9L194.4,199L194.1,198.7L193.9,198.8L193.9,199.1L192.3,199.1L190.6,199.1L190.6,200.1L189.8,200.1L190.5,200.6L191.1,201L191.3,201.4L191.6,201.5L191.6,202.1L189.3,202.1L188.5,203.6L188.7,203.9L188.5,204.3L188.5,204.8L186.5,202.9L185.6,202.3L184.2,201.9L183.2,202L181.8,202.7L180.9,202.9L179.7,202.4L178.4,202L176.7,201.2L175.4,201L173.4,200.2L172,199.4L171.5,198.9L170.6,198.8L168.8,198.2L168,197.4L166.2,196.4L165.3,195.3L164.9,194.5L165.5,194.3L165.3,193.8L165.7,193.4L165.7,192.8L165.1,192L165,191.3L164.4,190.4L162.8,188.7L161.1,187.3L160.2,186.2L158.7,185.5L158.4,185.1L158.7,184L157.8,183.6L156.7,182.7L156.3,181.5L155.4,181.4L154.3,180.4L153.5,179.6L153.5,179.1L152.5,177.7L151.9,176.4L151.9,175.7L150.7,175L150.1,175.1L149.1,174.6L148.8,175.3L149.1,176.2L149.3,177.5L149.9,178.2L151.2,179.4L151.4,179.8L151.7,180L151.9,180.6L152.3,180.5L152.6,181.7L153.1,182.1L153.5,182.7L154.6,183.6L155.2,185.2L155.7,186L156.2,186.8L156.3,187.7L157.1,187.8L157.8,188.6L158.5,189.4L158.4,189.7L157.7,190.3L157.4,190.3L156.9,189.3L155.8,188.3L154.5,187.4L153.6,187L153.7,185.7L153.4,184.7L152.6,184.2L151.4,183.4L151.1,183.6L150.7,183.2L149.6,182.8L148.6,181.8L148.7,181.6L149.4,181.7L150.1,181.1L150.2,180.3L148.8,179L147.8,178.5L147.1,177.5L146.5,176.3L145.7,174.9L145,173.3Z"/>
<path d="M188.5,204.8L188.5,204.3L188.7,203.9L188.5,203.6L189.3,202.1L191.6,202.1L191.6,201.5L191.3,201.4L191.1,201L190.5,200.6L189.8,200.1L190.6,200.1L190.6,199.1L192.3,199.1L193.9,199.1L193.9,200.5L193.7,202.4L194.2,202.4L194.8,202.7L195,202.5L195.5,202.7L194.7,203.4L193.9,203.9L193.7,204.2L193.9,204.5L193.5,205L193.1,205.1L193.2,205.3L192.9,205.5L192.3,205.9L192.2,206.2L191.3,205.9L190.2,205.9L189.4,205.5Z"/>
<path d="M217.9,230.5L217.2,230.1L216.3,229.5L215.8,229.7L214.4,229.5L213.9,228.7L213.6,228.8L211.8,227.8L211.6,227.2L212.3,227.1L212.2,226.2L212.6,225.6L213.5,225.5L214.2,224.4L214.9,223.5L214.2,223.1L214.6,222L214.2,220.4L214.5,220L214.3,218.5L213.6,217.6L213.8,216.7L214.3,216.8L214.7,216.3L214.3,215.3L214.5,215L215.4,215.1L216.7,213.9L217.4,213.7L217.4,213.1L217.7,211.6L218.7,210.8L219.8,210.8L220,210.4L221.4,210.6L222.7,209.7L223.4,209.3L224.3,208.5L224.9,208.6L225.3,209L225,209.6L223.9,209.9L223.4,210.8L222.8,211.3L222.2,211.9L222,213.2L221.6,214.2L222.4,214.3L222.7,215.1L223.1,215.5L223.2,216.2L223,216.9L223.1,217.2L223.5,217.4L223.9,218L226.2,217.8L227.2,218L228.4,219.5L229.1,219.3L230.3,219.5L231.3,219.2L232,219.5L231.7,220.5L231.3,221.1L231.1,222.3L231.5,223.5L232,224L232,224.4L231.2,225.3L231.8,225.7L232.3,226.3L232.8,228L232.4,228.2L232.1,227.2L231.6,226.6L231,227.2L227.6,227.2L227.7,228.3L228.7,228.5L228.6,229.2L228.3,229L227.3,229.3L227.3,230.5L228.1,231.2L228.3,232.2L228.3,232.9L227.5,237.7L226.6,236.8L226.1,236.7L227.2,235L225.9,234.1L224.9,234.3L224.2,234L223.3,234.4L222,234.2L220.9,232.4L220.1,231.9L219.6,231.1Z"/>
<path d="M229.7,322.2L230.4,323L231.3,324.3L233.5,325.4L236,325.8L235.2,326.7L233.5,326.7L232.6,326.1L231.6,326.1L229.7,326.1ZM228,260.9L228.9,262.1L229.1,263.4L230.1,264.1L229.5,265.8L230.4,267.8L231.1,270.2L232.4,269.9L232.6,270.4L232,272.2L230.1,273L230.1,276L229.8,276.5L230.3,277.2L229.1,278.3L227.9,279.9L227.3,281.5L227.5,283.2L226.4,285L227.2,288L227.7,288.3L227.6,289.9L226.6,291.7L226.7,293.1L225.4,294.3L225.4,295.9L225.9,297.6L224.9,298.2L224.4,299.8L224,301.6L224.3,303.7L223.6,304L224,306.1L224.8,306.7L224.2,307.5L225,307.8L225.2,308.5L224.4,308.8L224.6,309.8L224,312.1L223,313.6L223.3,314.5L222.7,315.6L221.3,316.4L221.5,318.2L222.1,318.9L223.3,318.8L223.3,320.1L224,321.1L228.2,321.3L229.8,321.6L228.3,321.6L227.4,322L225.8,322.6L225.6,324.3L224.8,324.3L222.9,323.7L220.9,322.5L218.7,321.5L218.1,320.4L218.6,319.4L217.7,318.2L217.5,315.3L218.3,313.6L220.1,312.2L217.5,311.7L219.1,310.2L219.7,307.3L221.7,307.9L222.6,304.3L221.4,303.8L220.9,306L219.8,305.7L220.3,303.2L220.9,300L221.7,298.8L221.2,297.1L221.1,295.1L221.8,295.1L222.9,292.3L224.1,289.5L224.8,286.9L224.4,284.2L224.9,282.8L224.7,280.6L225.7,278.5L226.1,275.1L226.6,271.5L227.2,267.6L227,264.7L226.7,262.3L227.6,261.8Z"/>
<path d="M229.7,322.2L229.7,326.1L231.6,326.1L232.6,326.1L232.1,326.8L230.6,327.4L229.7,327.3L228.7,327.2L227.4,326.7L225.6,326.4L223.4,325.4L221.6,324.5L219.2,322.5L220.6,322.9L223.1,324.1L225.4,324.7L226.3,323.9L226.9,322.7L228.5,322ZM248.9,283L248.5,284.4L248.1,286.2L248.1,287.9L247.7,288.3L247.5,289.5L247.4,290.4L249.6,291.9L249.4,293.1L250.5,293.8L250.4,294.7L248.7,296.9L246.1,297.9L242.6,298.2L240.7,298.1L241.1,299.1L240.7,300.4L241,301.3L240,301.9L238.2,302.1L236.5,301.5L235.9,302L236.1,303.7L237.3,304.2L238.2,303.7L238.8,304.6L237.1,305.1L235.7,306.2L235.5,308L235.1,308.9L233.4,308.9L232.1,309.8L231.6,311.1L233.3,312.4L234.9,312.8L234.3,314.3L232.3,315.3L231.1,317.3L229.5,318L228.8,318.9L229.4,320.7L230.6,321.7L229.8,321.6L228.2,321.3L224,321.1L223.3,320.1L223.3,318.8L222.1,318.9L221.5,318.2L221.3,316.4L222.7,315.6L223.3,314.5L223,313.6L224,312.1L224.6,309.8L224.4,308.8L225.2,308.5L225,307.8L224.2,307.5L224.8,306.7L224,306.1L223.6,304L224.3,303.7L224,301.6L224.4,299.8L224.9,298.2L225.9,297.6L225.4,295.9L225.4,294.3L226.7,293.1L226.6,291.7L227.6,289.9L227.7,288.3L227.2,288L226.4,285L227.5,283.2L227.3,281.5L227.9,279.9L229.1,278.3L230.3,277.2L229.8,276.5L230.1,276L230.1,273L232,272.2L232.6,270.4L232.4,269.9L233.8,268.3L236.1,268.8L237.1,270L237.8,268.6L239.8,268.7L240.1,269.1L243.3,271.9L244.7,272.2L246.9,273.5L248.7,274.2L248.9,274.9L247.2,277.6L249,278.1L250.9,278.3L252.3,278.1L253.9,276.7L254.2,275.2L255.1,274.8L255.9,275.8L255.9,277.2L254.4,278.2L253.3,278.9L251.3,280.6L248.9,283Z"/>
<path d="M360.2,142.6L360.6,143L360.5,143.8L360,143.8L359.6,143.6L359.8,142.7Z"/>
<path d="M392.1,129.2L392.3,128.2L391.7,128.4L390.6,127.8L390.4,126.8L392.6,126.3L394.8,126L396.7,126.3L398.5,126.3L398.8,126.6L397.6,127.6L398.1,129.2L397.3,129.8L395.9,129.8L394.4,129.1L393.6,128.9ZM387.9,128.3L389.8,128.3L390.2,127.8L388.4,127.8Z"/>
<path d="M389.4,135.3L389.2,134.8L389.4,134.3L388.7,134.1L386.8,133.8L386.5,132.3L388.4,131.7L391.4,131.9L393.1,131.7L393.3,132.1L394.3,132.2L395.9,133L396.1,133.8L394.7,134.3L394.3,135.3L392.4,136L390.7,136L390.3,135.5Z"/>
<path d="M389.1,144.4L388.6,144.9L388.3,145.6L387.9,145.8L386,145.2L385.4,145.3L385,145.7L384.2,146L384,145.8L383.1,146.1L382.5,146.2L382.3,146.5L380.9,146.7L380.2,146.5L379.3,146.1L379.1,145.5L379.3,145.3L379.5,144.9L380.3,144.9L380.9,144.7L380.9,144.6L381.3,144.5L381.4,144.1L381.8,144L382.1,143.7L382.6,143.7L382.7,143.8L383.4,143.6L384.3,144.2L385.3,143.8L386.2,144L387.4,143.8Z"/>
<path d="M378,148.3L378.5,147.2L378.2,146.8L379.2,146.8L379.3,146.1L380.2,146.5L380.9,146.7L382.3,146.5L382.5,146.2L383.1,146.1L384,145.8L384.2,146L385,145.7L385.4,145.3L386,145.2L387.9,145.8L388.3,145.6L389.2,146.1L389.3,146.5L388.3,146.9L387.4,148.1L386.4,149.3L385,149.6L383.9,149.5L382.6,150L381.9,150.2L380.5,149.9L379.1,149.2L378.6,148.9L378.3,148.3Z"/>
<path d="M373.8,148.9L375.2,149.1L376.1,148.7L377.6,148.6L378,148.3L378.3,148.3L378.6,148.9L377.2,149.4L377,150.1L376.4,150.3L376.4,150.8L375.8,150.7L375.2,150.5L374.8,150.7L373.6,150.7L374,150.5L373.6,149.8Z"/>
<path d="M382.6,150L383,150.7L383.5,151.1L382.9,151.8L382.1,151.4L380.9,151.4L379.4,151.2L378.5,151.2L378.2,151.6L377.5,151.2L377.2,151.9L378,152.7L378.4,153.2L379.2,153.9L379.9,154.3L380.5,155L382.1,155.7L381.9,156L380.2,155.3L379.2,154.7L377.6,154.2L376.2,152.9L376.5,152.8L375.7,152L375.7,151.4L374.6,151.2L374,151.9L373.5,151.3L373.6,150.7L374.8,150.7L375.2,150.5L375.8,150.7L376.4,150.8L376.4,150.3L377,150.1L377.2,149.4L378.6,148.9L379.1,149.2L380.5,149.9L381.9,150.2Z"/>
<path d="M386.1,150.8L387.2,151.2L387.3,152L388.4,152.5L388.9,152.1L389.3,152.3L388.9,152.6L389.2,152.9L388.8,153.3L389,153.9L389.8,154.7L389.1,155.2L388.9,155.8L389.1,156L388.8,156.2L388,156.3L387.4,156.4L387.3,156.2L387.5,156L387.7,155.6L387.4,155.6L387.1,155.3L386.8,155.2L386.6,154.9L386.3,154.8L386,154.6L385.7,154.7L385.5,155.3L385.1,155.4L385.2,155.2L384.5,154.9L384,154.7L383.7,154.4L383.2,154.1L383.6,154.1L383.9,153.2L383.1,152.6L383.5,151.8L382.9,151.8L383.5,151.1L383,150.7L382.6,150L383.9,149.5L385,149.6L385.9,150.3Z"/>
<path d="M389.2,152.9L389.7,153.6L390.4,153.5L391.8,153.8L394.3,153.9L395.2,153.4L397.3,153L398.5,153.6L399.6,153.8L398.6,154.6L398,155.8L398.6,156.8L397.1,156.6L395.3,157.1L395.3,158L393.7,158.2L392.4,157.5L391,158L389.8,158L389.6,156.8L388.8,156.2L389.1,156L388.9,155.8L389.1,155.2L389.8,154.7L389,153.9L388.8,153.3Z"/>
<path d="M389.3,146.5L390.1,146.1L391.2,146.3L392.3,146.4L393.1,146.8L393.7,146.5L395,146.3L395.4,145.9L396.2,145.9L396.7,146.1L397.2,146.6L397.8,147.4L398.8,148.4L398.9,149.2L398.7,149.9L399,150.7L399.8,151L400.6,150.8L401.4,151.1L401.4,151.5L400.6,151.9L400,151.7L399.6,153.8L398.5,153.6L397.3,153L395.2,153.4L394.3,153.9L391.8,153.8L390.4,153.5L389.7,153.6L389.2,152.9L388.9,152.6L389.3,152.3L388.9,152.1L388.4,152.5L387.3,152L387.2,151.2L386.1,150.8L385.9,150.3L385,149.6L386.4,149.3L387.4,148.1L388.3,146.9Z"/>
<path d="M364.5,221.9L362.7,222.5L362,222.4L361.4,222.8L360,222.8L359,221.7L358.4,220.4L357.2,219.2L355.9,219.3L354.4,219.3L354.5,216.4L354.4,215.3L354.7,214.2L355.3,213.7L356.1,212.6L355.9,212.1L356.3,211.4L355.9,210.4L356,209.8L356.1,208.3L356.6,207.6L356.8,206.6L357.3,206.2L359.2,206L360.9,206.6L361.6,207.3L362.5,207.3L363.3,206.9L365.4,207.8L366.3,207.7L367.3,207L368.3,207L368.9,206.8L369.8,206.9L371.1,207.4L372.5,206.4L372.9,206.5L374.1,208.4L374.4,208.4L375.1,209.1L374.9,209.4L374.8,210L373.4,211.3L372.9,212.4L372.7,213.4L372.3,213.7L371.9,215L371,215.7L370.7,216.6L370.3,217.3L370.2,218L369,218.6L368,217.9L367.3,217.9L366.3,218.9L365.8,218.9L365,220.6Z"/>
<path d="M412.2,172L411.8,172.1L411.6,172.4L411,172.4L411.7,170.9L412.5,169.7L412.6,169.7L413.3,169.8L413.6,170.4L412.7,171.1Z"/>
<path d="M439.8,187.8L440.1,187.8L440.2,188.2L441.5,187.9L443,188L444,188.1L445.2,186.9L446.5,185.7L447.6,184.7L448,185.3L448.2,186.7L447.3,186.7L447.2,187.8L447.5,188L446.7,188.4L446.7,189.1L446.2,189.8L446.1,190.5L445.8,190.9L440.5,190L439.9,188.2Z"/>
<path d="M438.4,186.9L438.3,185.7L438.8,184.7L439.3,184.6L439.8,185.1L439.8,186.1L439.5,187.2L439,187.3Z"/>
<path d="M511.6,191.7L511.6,192.9L510.9,192.7L511.1,194.1L510.6,193.2L510.5,192.3L510.1,191.4L509.4,190.4L507.8,190.3L508,191.1L507.4,192L506.7,191.7L506.4,192L505.9,191.8L505.2,191.7L505,190.2L504.4,188.9L504.7,187.9L503.6,187.4L504,186.7L505.1,186.1L503.8,185.2L504.4,184L505.8,184.7L506.6,184.8L506.8,186L508.4,186.3L510.1,186.3L511.1,186.5L510.3,188L509.5,188.1L509,189.1L509.9,190L510.2,188.9L510.7,188.9Z"/>
<path d="M528.9,208.9L527.4,208.1L525.9,208.1L526.1,206.8L524.6,206.8L524.4,208.7L523.5,211.2L522.9,212.8L523,214.1L524.2,214.1L524.9,215.7L525.2,217.2L526.2,218.2L527.2,218.4L528.1,219.3L527.6,220L526.4,220.3L526.3,219.4L524.9,218.6L524.6,218.9L523.9,218.2L523.6,217.4L522.6,216.4L521.8,215.6L521.5,216.6L521.2,215.6L521.4,214.5L521.9,212.8L522.7,211L523.7,209.4L523,207.8L523,207L522.8,206L521.7,204.7L521.2,203.8L521.8,203.4L522.5,201.9L521.8,200.8L520.7,199.5L519.8,198L520.6,197.6L521.3,195.8L522.6,195.7L523.6,194.9L524.6,194.5L525.4,195.1L525.5,196.1L526.6,196.2L526.2,198L526.3,199.6L528.1,198.6L528.6,198.9L529.6,198.8L530,198.2L531.3,198.3L532.6,199.7L532.8,201.5L534.2,203L534.1,204.5L533.5,205.3L531.9,205L529.6,205.3L528.5,206.8Z"/>
<path d="M516.2,220.6L520,221L521.6,222.7L522.9,223.9L523.9,224.7L525.5,226.5L527.3,226.6L528.8,227.8L529.8,229.2L531.1,230L530.4,231.4L531.4,232.1L532,232.1L532.3,233.3L532.9,234.3L534.2,234.4L535.1,235.5L534.6,237.7L534.6,240.4L532.6,240.5L531.2,239L528.9,237.6L528.2,236.5L526.8,235.1L526,233.8L524.6,231.3L523.1,229.9L522.6,228.4L522,227L520.4,225.9L519.5,224.4L518.1,223.4L516.3,221.5ZM533.5,242.2L535,240.5L537.1,240.6L538.5,241.3L539.2,241.4L539.5,242L542.8,242.2L543.2,241.5L546.4,242.3L547.1,243.5L549.7,243.8L551.9,244.8L549.8,245.5L547.9,244.8L546.3,244.8L544.5,244.7L542.9,244.4L540.9,243.7L539.6,243.6L538.9,243.8L535.7,243L535.4,242.3ZM541.3,226.7L541.6,227.9L542.8,228.9L543.9,228.5L545,228.6L546,227.7L546.9,227.6L548.5,228.1L549.9,227.7L550.8,225.3L551.5,224.7L552.1,222.7L554.1,222.7L555.6,223L554.6,224.6L555.9,226.2L555.6,227L557.6,228.6L555.5,228.8L554.9,230L555,231.6L553.3,232.8L553.3,234.5L552.6,237.2L552.4,236.6L550.4,237.4L549.7,236.3L548.4,236.2L547.6,235.7L545.5,236.3L544.8,235.4L543.7,235.5L542.3,235.3L542,233L541.1,232.5L540.3,231L540,229.5L540.2,227.9ZM559,229.9L559.4,231.1L561,232.7L561.9,231.9L565.2,231.3L565,232.1L564.3,231.8L563.5,232.9L562,233.5L563.6,235.8L563.3,236.4L564.9,238.4L564.9,239.5L563.9,240L563.3,239.4L564.1,238L562.4,238.7L562,238.2L562.2,237.5L560.9,236.5L561,234.8L559.9,235.3L560,237.4L560.1,239.9L559,240.1L558.2,239.6L558.7,238L558.5,236.3L557.7,236.3L557.2,235.1L557.9,234L558.2,232.6L559.1,229.9L559.4,229.2L560.9,227.9L562.3,228.4L564.5,228.7L566.5,228.6L568.2,227.3L568.5,227.7L567.1,229.4L565.8,229.8L564.1,229.4L561.2,229.5L559.7,229.8ZM596,234.7L596,246.1L594.5,244.7L592.8,244.4L592.3,244.8L590.1,244.9L590.9,243.5L592,243L591.5,241.1L590.7,239.6L587.3,238.2L585.8,238L583.2,236.4L582.7,237.2L582,237.4L581.6,236.8L581.6,236L580.3,235.1L582.2,234.5L583.4,234.5L583.3,234.1L580.7,234.1L580,233L578.5,232.7L577.7,231.8L580.1,231.4L581,230.8L583.8,231.6L584.1,232.2L584.5,235L586.4,236.1L587.8,234.2L589.8,233.2L591.4,233.2L592.9,233.8L594.2,234.4ZM565.4,248.1L565.6,247.5L567.1,247.9L568.2,246.6L568,245.7L566.3,246.5L566.3,246.4L565.6,248.3ZM556.3,244.8L557.4,244.7L557.8,245.4L555.8,245.8L554.6,246L553.7,246L554.2,245L555.2,245L555.7,244.4ZM564.4,244.3L564.2,245.3L561.5,245.8L559.2,245.6L559.2,244.9L560.6,244.6L561.7,245.1L562.9,245ZM560.6,248.1L559.9,248.1L557.6,246.9L559.2,246.6L560.1,247.1ZM574.5,228.2L574.4,229.7L573.5,229.6L573.3,230.6L574,231.6L573.5,231.8L572.8,230.7L573.3,227.4L572.3,228.4L572.6,227L573.2,226.4ZM577.6,235.6L578.3,236.9L576.8,236.2L575.4,236.1L574.4,236.2L573.2,236.1L573.6,235.2L575.7,235.1ZM572,236.2L571.4,236.8L570.1,236.5L569.8,235.8L571.6,235.7ZM533.8,233.9L535.2,233L536.1,234.6L535.9,235.4L534.7,235.3ZM550.6,244.4L551.8,244.7L551,245.6L549.7,244.7ZM552.2,244.7L553.6,244.9L553.1,245.8L552.2,245.6ZM519.7,227.8L520.7,228.8L520.2,229.2L519.3,228.1ZM522.3,231.9L523.2,233.2L522.6,233.2L522,232.3ZM584,240.2L585,239.8L585,241.7L584.2,242.3L584,240.9ZM578.6,243.3L579.8,242.8L579.6,244.2L578.7,244.2Z"/>
<path d="M562.5,187.6L561.4,190.4L560.7,191.8L559.7,190.3L559.5,189L560.6,187.3L562,186L562.8,186.5Z"/>
</g>
<g fill="#5aaa5c">
<path d="M248.9,283L251.3,280.6L253.3,278.9L254.4,278.2L255.9,277.2L255.9,275.8L255.1,274.8L254.2,275.2L254.5,274.2L254.8,273.1L254.8,272.2L254.1,271.9L253.5,272.1L252.8,272.1L252.6,271.4L252.5,269.8L252.1,269.3L251,268.8L250.3,269.1L248.4,268.8L248.5,266.4L248,265.5L248.6,265.1L248.4,264.1L248.9,263.3L249.2,262L248.8,260.9L247.8,260.4L247.6,259.7L247.9,258.7L244.5,258.6L243.9,256.6L244.4,256.6L244.3,255.8L244,255.3L243.9,254.3L242.9,253.8L241.8,253.8L241.1,253.3L239.9,252.9L239.2,252.3L237.3,252L235.4,250.4L235.5,249.2L235.3,248.6L235.5,247.3L233.2,247.6L232.3,248.2L230.7,248.9L230.3,249.4L229.4,249.5L228.1,249.3L227.2,249.6L226.4,249.4L226.5,246.8L225.1,247.8L223.5,247.8L222.9,246.8L221.7,246.7L222,246L221.1,244.9L220.4,243.3L220.8,243L220.8,242.3L221.9,241.8L221.7,240.8L222.2,240.2L222.3,239.4L224.3,238.2L225.7,237.9L225.9,237.6L227.5,237.7L228.3,232.9L228.3,232.2L228.1,231.2L227.3,230.5L227.3,229.3L228.3,229L228.6,229.2L228.7,228.5L227.7,228.3L227.6,227.2L231,227.2L231.6,226.6L232.1,227.2L232.4,228.2L232.8,228L233.7,228.9L235.1,228.8L235.5,228.3L236.7,227.9L237.5,227.6L237.7,226.8L238.9,226.4L238.8,226L237.3,225.8L237.1,224.7L237.2,223.6L236.4,223.1L236.7,222.9L238,223.2L239.4,223.6L239.9,223.2L241.1,222.9L243.1,222.3L243.8,221.6L243.5,221.1L244.4,221L244.8,221.4L244.6,222.2L245.2,222.5L245.6,223.3L245.1,223.9L244.9,225.4L245.3,226.3L245.4,227.1L246.5,227.9L247.4,228L247.5,227.6L248.1,227.6L248.9,227.3L249.4,226.8L250.4,226.9L250.8,226.9L251.8,227L251.9,226.7L251.7,226.3L251.8,225.8L252.5,226L253.4,225.8L254.4,226.2L255.1,226.5L255.7,226L256.1,226.1L256.3,226.6L257.1,226.5L257.8,225.8L258.3,224.5L259.4,222.9L260,222.9L260.4,223.8L261.4,226.9L262.3,227.2L262.4,228.4L261.1,229.8L261.6,230.3L264.7,230.6L264.8,232.4L266.1,231.2L268.3,231.8L271.2,232.9L272,233.9L271.7,234.9L273.8,234.4L277.2,235.3L279.8,235.2L282.4,236.7L284.6,238.6L286,239.1L287.4,239.2L288.1,239.7L288.7,242L289,243L288.3,245.9L287.4,247.1L284.9,249.5L283.8,251.5L282.5,253L282.1,253L281.6,254.3L281.7,257.6L281,261.4L280.5,262.1L280.2,264.5L278.4,266.7L278.1,268.5L276.7,269.3L276.3,270.3L274.4,270.3L271.6,271L270.4,271.8L268.4,272.3L266.4,273.7L264.9,275.4L264.7,276.7L264.9,277.7L264.6,279.5L264.2,280.3L263,281.3L261.1,284.3L259.5,285.7L258.3,286.6L257.5,288.2L256.4,289.2L255.9,288.2L256.7,287.4L255.7,286.2L254.3,285.2L252.5,284.1L251.8,284.2L250.1,282.8Z"/>
<path d="M338.8,136.1L339.1,137.3L337.8,138.9L334.7,139.9L332.2,139.6L333.6,137.8L332.7,136L335.1,134.7L336.4,133.9L336.8,134.8L336.4,135.7L337.5,135.7Z"/>
<path d="M339.8,134.9L338.8,136.1L337.5,135.7L336.4,135.7L336.8,134.8L336.4,133.9L337.9,133.8L339.2,133.7L339.8,134.3Z"/>
<path d="M346.1,132.7L346.2,132.5L345.1,132.3L344.2,132.3L343.7,132.3L344.8,131.8L345.3,131.3L346,130.6L346.2,129.4L344.3,129.4L342.5,129.6L344.3,127.7L342.3,127.9L340.9,127.7L340.4,128.5L339.5,129.2L339.9,129.9L338.9,131L339.9,131.5L339.5,132.2L340.2,132.5L339.9,133.5L340.8,132.7L341.3,133.4L340.8,134L341.2,134.5L342.3,134.3L343.5,134.2L344.3,134.1L345.1,133.7L345.6,133ZM338.6,130.4L339.3,130.2L338.8,129.5L337.9,129.7ZM337.2,129.4L338.8,128.3L338.6,128L337.2,128.6ZM343.9,127.3L344.9,127.1L344.4,126.6L343.7,126.9ZM347,125.3L347.9,124.8L347.6,124.1L346.9,124.7Z"/>
<path d="M344.3,136.9L344.5,137.6L344.2,138.3L344.4,138.8L345,140L343.7,140.3L342.1,140L340.4,139.3L342.3,138.8L342.5,137.8L341.3,137.9L341.6,136.7L342.7,137.1Z"/>
<path d="M333.9,157L334.5,156.6L335.2,156.3L335.7,157.2L336.7,157.2L337,156.9L338,157L338.5,157.9L337.7,158.4L337.7,159.7L337.4,160L337.3,160.8L336.5,160.9L337.2,162L336.8,163.1L337.4,163.7L337.1,164.1L336.5,164.8L336.6,165.4L335.9,165.8L335,165.6L334.1,165.8L334.4,164.4L334.2,163.3L333.4,163.2L333,162.5L333.1,161.4L333.8,160.7L334,160L334.3,159L334.3,158.2L333.9,157.6Z"/>
<path d="M354,140.8L355.4,140.5L356.7,140.6L358.3,140.2L359.5,141L360.4,141.4L360.2,142.6L359.8,142.7L359.6,143.6L358,142.8L357.1,143L355.9,142.2L355.1,141.5L354.3,141.4Z"/>
<path d="M379.3,146.1L379.2,146.8L378.2,146.8L378.5,147.2L378,148.3L377.6,148.6L376.1,148.7L375.2,149.1L373.8,148.9L371.3,148.5L370.9,147.9L369.2,148.2L369,148.5L367.9,148.3L367,148.2L366.2,147.9L366.5,147.5L366.4,147.1L367,147.1L367.8,147.5L368.1,147.1L369.6,147.2L370.9,146.8L371.7,146.9L372.2,147.2L372.4,146.9L372.2,145.8L372.8,145.6L373.4,144.8L374.7,145.3L375.7,144.6L376.3,144.5L377.7,145L378.5,144.9L379.3,145.3Z"/>
<path d="M364.6,134.2L363.8,133.2L363.8,131.4L364.1,130.9L364.6,130.4L366.1,130.3L366.7,129.8L368.1,129.3L368.1,130.2L367.6,130.8L367.8,131.3L368.7,131.5L368.3,132.2L367.8,132L366.5,133.3L367,134.1L365.9,134.4ZM371.3,132.1L371.8,133L370.8,134.4L368.9,133.5L368.7,132.7L371.3,132.1ZM366.8,133.2L368.5,133.6L368.3,134L367.1,133.9Z"/>
<path d="M358.4,121.9L360,120.8L364.6,119.3L368.1,117.5L371.2,115.1L375.4,111.7L378.4,110.4L383.2,108.2L387,107.4L389.9,107.5L392.6,106.1L395.7,106.1L398.9,105.8L404.3,107.1L402.1,107.5L404,108.6L401,109.3L399.6,109.5L400.4,108.3L398.1,107.6L395.4,108.2L394.5,109.5L392.9,110.2L391,109.8L388.7,109.9L386.8,109L385.7,109.4L384.7,109.5L384.4,110.7L381.1,110.4L380.6,111.4L379,111.4L377.8,112.6L376.1,114.5L373.3,117L374,117.6L373.4,118.3L371.6,118.2L370.5,119.9L370.6,122.2L371.7,123.1L371.1,125.1L369.7,126.3L368.9,127.3L367.8,126.3L364.3,128.3L362,128.7L359.6,127.8L358.9,125.9L358.4,121.9Z"/>
<path d="M368.9,127.3L369.7,126.3L371.1,125.1L371.7,123.1L370.6,122.2L370.5,119.9L371.6,118.2L373.4,118.3L374,117.6L373.3,117L376.1,114.5L377.8,112.6L379,111.4L380.6,111.4L381.1,110.4L384.4,110.7L384.7,109.5L385.7,109.4L388.1,110.3L390.8,111.5L390.8,114.2L391.4,114.8L388.4,115.4L386.7,116.6L387,117.6L384.2,119L380.8,120.5L379.6,123L380.8,124.2L382.5,125.2L380.9,127.2L379.1,127.6L378.4,130.5L377.4,132.2L375.3,132L374.3,133.4L372.3,133.5L371.7,131.8L370.3,129.8L368.9,127.3ZM381.3,130.1L382.7,129.9L383,128.9L381.8,129.3ZM378.3,132L379.2,130.8L379.5,130.1L378.7,130.9Z"/>
<path d="M399.6,109.5L399.4,110.7L402,111.9L400.4,113.2L402.5,115.2L401.3,116.7L402.8,118L402.1,119.1L404.7,120.3L404.1,121.2L402.4,122.2L398.7,124.5L395.5,124.6L392.5,125.2L389.6,125.6L388.6,124.7L386.9,124.1L387.3,122.4L386.5,120.8L387.3,119.8L388.9,118.7L392.9,116.8L394,116.4L393.8,115.7L391.4,114.8L390.8,114.2L390.8,111.5L388.1,110.3L385.7,109.4L386.8,109L388.7,109.9L391,109.8L392.9,110.2L394.5,109.5L395.4,108.2L398.1,107.6L400.4,108.3Z"/>
<path d="M374.3,136.3L375.5,135.7L378.2,134.9L380.4,134.3L382.2,134.6L382.3,135.1L384,135.1L386.2,135.3L389.4,135.3L390.3,135.5L390.7,136L390.8,136.8L391.2,137.4L391.2,138.1L390.2,138.5L390.7,139.3L390.8,140.1L391.6,141.6L391.5,142.1L390.6,142.3L389,143.7L389.5,144.5L389.1,144.4L387.4,143.8L386.2,144L385.3,143.8L384.3,144.2L383.4,143.6L382.7,143.8L382.6,143.7L381.8,142.8L380.5,142.7L380.3,142.2L379.1,142L378.9,142.4L377.9,142.1L378,141.6L376.7,141.5L375.9,140.9L375.2,139.8L375.3,139.2L374.9,138.2L374.2,137.6L374.7,137.1Z"/>
<path d="M375.9,140.9L376.7,141.5L378,141.6L377.9,142.1L378.9,142.4L379.1,142L380.3,142.2L380.5,142.7L381.8,142.8L382.6,143.7L382.1,143.7L381.8,144L381.4,144.1L381.3,144.5L380.9,144.6L380.9,144.7L380.3,144.9L379.5,144.9L379.3,145.3L378.5,144.9L377.7,145L376.3,144.5L375.7,144.6L374.7,145.3L373.4,144.8L372.4,144L371.5,143.6L371.4,142.9L371,142.4L372.3,142L373,141.5L374.2,141.2L374.7,140.9L375.1,141.1Z"/>
<path d="M395.6,168.5L395.4,169L392.8,169.2L392.9,168.9L390.7,168.5L391.1,167.8L392,168.4L393.4,168.3L394.7,168.4L394.6,168.7ZM389.8,158L391,158L392.4,157.5L393.7,158.2L395.3,158L395.3,157.1L396.1,157.6L395.6,158.7L395.2,158.9L394.1,158.8L393.2,158.6L391.1,159.1L392.3,160.1L391.4,160.4L390.4,160.4L389.5,159.5L389.2,159.8L389.6,160.9L390.5,161.7L389.8,162.1L390.8,162.9L391.6,163.4L391.7,164.4L390.1,163.9L390.6,164.8L389.4,165L390.1,166.6L389,166.6L387.5,165.8L386.9,164.4L386.6,163.3L385.9,162.4L385,161.5L384.9,161L385.7,160.1L385.8,159.5L386.3,159.3L386.4,158.8L387.5,158.7L388.2,158.3L389.1,158.3L389.4,158ZM390.4,162.7L391.8,163.4L392.6,163.8L392.1,162.7L390.7,162ZM395.1,162L396.1,162L395.8,161.3L394.9,161.5ZM398.2,166.8L398.9,167.3L399,166.5Z"/>
<path d="M406,168.9L407,168.8L407.2,168.4L408.5,168.4L410.1,167.9L408.9,168.6L409.1,169.1L407.3,169.8L406.4,169.6Z"/>
<path d="M410.7,178.6L410.2,179.3L409.8,180.7L409.3,181.6L408.9,181.9L408.3,181.3L407.6,180.5L406.3,178L406.1,178.2L406.8,180L407.9,181.8L409.2,184.5L409.9,185.5L410.5,186.5L412,188.4L411.7,188.7L411.7,189.8L413.8,191.4L414.1,191.8L393.3,191.8L393.3,179.1L392.8,177.7L393.3,176.6L393,175.9L393.6,175L396,175L397.6,175.5L399.4,176L400.2,176.3L401.5,175.7L402.2,175.2L403.8,175L405,175.3L405.5,176.1L405.9,175.6L407.3,176L408.7,176.1L409.5,175.6Z"/>
<path d="M378.2,280.1L379,279.3L379.7,279.8L380,280.5L380.8,280.6L381.9,281L382.9,280.8L384.4,279.9L384.4,273.5L384.9,273.7L385.9,275.4L385.8,276.5L386.2,277.1L387.4,276.9L388.3,276.1L389.1,275.6L389.5,274.8L390.4,274.4L391.1,274.6L392,275.1L393.4,275.1L394.5,274.7L394.7,274.2L395,273.4L395.9,273.2L396.5,272.6L397,271.4L398.6,270.1L401.1,268.8L401.8,268.8L402.6,269.1L403.2,268.9L404.2,269.1L405,271.5L405.4,272.8L405.1,274.7L405.3,275.4L404.4,275L403.9,275.2L403.7,275.7L403.3,276.3L403.3,276.9L404.3,277.9L405.3,277.7L405.7,276.9L407,276.9L406.6,278.2L406.4,279.7L405.9,280.4L404.7,281.3L404.4,281.6L403.6,282.5L403.2,283.4L402.2,284.6L400.2,286.4L399,287.5L397.6,288.3L395.8,288.9L394.9,289L394.7,289.5L393.6,289.3L392.8,289.6L390.9,289.2L389.8,289.5L389.1,289.4L387.3,290.1L385.8,290.3L384.7,291L383.9,291L383.2,290.4L382.6,290.4L381.8,289.6L381.8,289.9L381.5,289.4L381.5,288.4L381,287.2L381.5,286.9L381.5,285.5L380.4,283.9L379.5,282.4L378.2,280.1ZM400.3,280.8L400.9,281.3L400.4,282.2L400.1,282.7L399.1,283L398.8,283.6L398.1,283.8L396.8,282.4L397.8,281.3L398.7,280.6L399.5,280.3Z"/>
<path d="M414.2,158L416.7,158.6L418.7,158.4L420.2,158.5L422.3,157.6L424.1,157.5L425.8,158.4L426.1,159L425.9,159.9L427.2,160.3L427.9,160.8L426.7,161.3L427.3,163.3L426.9,163.8L427.9,165.2L427,165.5L426.4,165.1L424.4,164.9L423.7,165.1L421.7,165.4L420.7,165.4L418.7,166L417.3,166L416.4,165.7L414.4,166.2L413.9,165.9L413.8,166.8L413.3,167.2L412.8,167.6L412.2,166.8L412.8,166.2L411.8,166.3L410.3,165.9L409.1,166.9L406.5,167.1L405,166.2L403.2,166.1L402.8,166.8L401.6,167L399.9,166.1L398,166.1L396.9,164.4L395.6,163.4L396.5,162.1L395.4,161.2L397.3,159.6L400,159.5L400.7,158.2L404.1,158.4L406.2,157.3L408.2,156.8L411.1,156.7ZM397.2,159.1L395.7,160L395.2,159.2L395.2,158.9L395.6,158.7L396.1,157.6L395.3,157.1L397.1,156.6L398.6,156.8L398.8,157.5L400.3,158L400,158.5Z"/>
<path d="M412.1,173L411.8,173.6L411.1,173.4L410.8,174.5L411.2,174.7L410.8,174.9L410.7,175.4L411.5,175.2L411.5,175.9L410.7,178.6L409.5,175.6L410,175.1L409.9,175L410.4,174.2L410.7,172.8L411,172.4L411.6,172.4L411.8,172.1L412.2,172L412.3,172.8L412,173Z"/>
<path d="M424.4,201.6L424.2,200.9L423.7,200.4L423.5,199.7L422.6,199L421.7,197.6L421.2,196.1L420,195L419.2,194.7L418,193L417.8,191.8L417.9,190.7L416.9,188.8L416.1,188.1L415.1,187.8L414.6,186.8L414.7,186.4L414.2,185.5L413.7,185.1L413,183.8L411.9,182.4L411,181.2L410.2,181.2L410.4,180.2L410.5,179.6L410.7,178.9L412.7,179.2L413.4,178.6L413.9,178L415.2,177.8L415.5,177.2L416.1,176.9L414.3,175.1L417.8,174.3L418.2,174L420.2,174.5L422.9,175.7L427.8,179.2L431,179.3L432.6,179.5L433,180.3L434.3,180.3L434.9,181.8L435.8,182.2L436.1,182.8L437.3,183.6L437.4,184.3L437.2,184.9L437.4,185.4L438,185.9L438.2,186.5L438.4,186.9L439,187.3L439.5,187.2L439.8,187.8L439.9,188.2L440.5,190L445.8,190.9L446.1,190.5L446.9,191.8L445.8,195.2L440.5,197L435.5,197.7L433.8,198.4L432.6,200.3L431.8,200.6L431.3,200L430.7,200.1L429,199.9L428.7,199.7L426.6,199.8L426.2,199.9L425.5,199.5L425,200.3L425.2,201.1Z"/>
<path d="M443.9,165.2L445.4,164.9L446.7,163.9L447.8,163.9L448.6,163.6L449.8,163.7L451.8,164.6L453.2,164.8L455.2,166.4L456.5,166.4L456.6,167.9L455.9,170.1L455.4,171.3L456.2,171.6L455.4,172.6L456,174L456.1,175.1L457.5,175.4L457.6,176.5L456,178.1L456.9,179L457.6,180L459.3,180.8L459.3,182.4L460.1,182.6L460.3,183.4L457.8,184.3L457.1,186.4L453.8,185.8L451.9,185.4L450,185.2L449.2,183.1L448.4,182.8L447,183.1L445.3,183.9L443.1,183.3L441.4,182L439.7,181.5L438.5,179.9L437.2,177.5L436.3,177.8L435.2,177.2L434.5,177.9L433.5,177L433.5,176L433,176.1L433.3,174.8L432.4,173.5L430.2,172.5L429,170.8L429.4,169.5L430.3,168.9L430.2,167.8L429,167.3L427.9,165.2L426.9,163.8L427.3,163.3L426.7,161.3L427.9,160.8L428.2,161.5L429.1,162.3L430.3,162.5L430.9,162.4L433,161.2L433.6,161L434.2,161.5L433.5,162.4L434.6,163.3L435.1,163.2L435.6,164.5L437.3,164.9L438.5,165.8L441,166.1L443.7,165.6Z"/>
<path d="M481,165.3L482.3,166.1L482.8,167.5L485.7,168.2L484,169.6L482,169.9L479.4,169.5L478.5,170.2L479.1,171.8L479.8,173L481.2,173.8L479.7,174.8L479.7,176.1L478,177.8L476.9,179.6L475.1,181.4L473.1,181.3L471.1,183.1L472.3,183.9L472.5,185.3L473.4,186.1L473.8,187.6L469.9,187.6L468.8,188.8L467.5,188.4L467,187.1L465.6,185.8L462.4,186.1L459.6,186.1L457.1,186.4L457.8,184.3L460.3,183.4L460.1,182.6L459.3,182.4L459.3,180.8L457.6,180L456.9,179L456,178.1L459,179L460.7,178.7L461.8,178.9L462.1,178.5L463.3,178.7L465.6,178L465.6,176.5L466.6,175.5L467.9,175.5L468.1,175L469.5,174.8L470.1,174.9L470.8,174.5L470.7,173.4L471.4,172.3L472.5,171.9L471.9,170.8L473.5,170.8L474,170.2L473.9,169.5L474.8,168.8L474.6,167.9L474.2,167.2L475.2,166.4L477.1,166L479.1,165.8L480,165.5Z"/>
<path d="M485.7,168.2L487.5,170.2L487.4,171.6L488.1,172.5L488,173.4L486.8,173.2L487.2,175.1L489,176.2L491.4,177.5L490.3,178.2L489.6,179.9L491.3,180.5L492.9,181.4L495.2,182.4L497.6,182.6L498.6,183.5L500,183.7L502.1,184.1L503.5,184L503.7,183.3L503.5,182.2L503.6,181.5L504.7,181.1L504.8,182.5L504.9,182.8L506.5,183.5L507.6,183.2L509.1,183.3L510.5,183.3L510.6,182.2L509.9,181.7L511.3,181.4L512.9,180.2L514.9,179L516.4,179.5L517.6,178.7L518.4,179.8L517.8,180.6L519.7,180.8L519.9,181.5L519.2,181.8L519.4,182.9L518.1,182.6L515.9,183.8L515.9,184.8L515,186.2L514.9,187.1L514.1,188.5L512.7,188.1L512.7,189.9L512.3,190.5L512.5,191.3L511.6,191.7L510.7,188.9L510.2,188.9L509.9,190L509,189.1L509.5,188.1L510.3,188L511.1,186.5L510.1,186.3L508.4,186.3L506.8,186L506.6,184.8L505.8,184.7L504.4,184L503.8,185.2L505.1,186.1L504,186.7L503.6,187.4L504.7,187.9L504.4,188.9L505,190.2L505.2,191.7L505,192.3L503.8,192.3L501.6,192.6L501.7,194L500.8,195L498.3,196.2L496.3,198.2L495,199.3L493.3,200.5L493.3,201.3L492.4,201.7L490.8,202.3L490,202.4L489.5,203.7L489.9,206L490,207.5L489.2,209.1L489.2,212.1L488.3,212.2L487.5,213.5L488,214.1L486.4,214.6L485.9,215.8L485.2,216.3L483.5,214.6L482.7,212.2L482,210.4L481.4,209.6L480.5,207.9L480,205.8L479.7,204.7L478.1,202.3L477.4,198.9L476.9,196.6L476.9,194.5L476.6,192.9L474,193.9L472.8,193.7L470.5,191.6L471.3,191L470.8,190.3L468.8,188.8L469.9,187.6L473.8,187.6L473.4,186.1L472.5,185.3L472.3,183.9L471.1,183.1L473.1,181.3L475.1,181.4L476.9,179.6L478,177.8L479.7,176.1L479.7,174.8L481.2,173.8L479.8,173L479.1,171.8L478.5,170.2L479.4,169.5L482,169.9L484,169.6Z"/>
<path d="M526.3,219.4L526.4,220.3L527.6,220L528.1,219.3L528.5,219.5L529.6,220.6L530.3,221.7L530.4,222.9L530.2,223.7L530.4,224.3L530.5,225.3L531.1,225.8L531.8,227.4L531.8,227.9L530.6,228.1L528.9,226.8L526.8,225.4L526.6,224.5L525.6,223.3L525.4,221.9L524.7,220.9L524.9,219.6L524.6,218.9L524.9,218.6ZM556.9,222.4L555.6,223L554.1,222.7L552.1,222.7L551.5,224.7L550.8,225.3L549.9,227.7L548.5,228.1L546.9,227.6L546,227.7L545,228.6L543.9,228.5L542.8,228.9L541.6,227.9L541.3,226.7L542.6,227.3L543.9,227L544.3,225.5L545,225.1L547.1,224.8L548.4,223.4L549.2,222.3L550,223.2L550.4,222.6L551.2,222.7L551.3,221.5L551.4,220.7L552.7,219.5L553.6,218.1L554.3,218.1L555.2,219L555.3,219.7L556.5,220.2L557.9,220.7L557.8,221.4L556.6,221.5Z"/>
<path d="M573.9,162.7L575.4,164.8L575.9,165.9L575.9,167.9L575.2,168.9L573.7,169.2L572.3,169.9L570.7,170.1L570.5,169.2L570.8,167.8L570,166L571.3,165.7L570.1,164.2L570.3,164.1L571,164.1L571.7,163.3L572.9,163.3L573.7,163.1ZM570.2,172L571.4,171.9L571.2,171.6L570.4,171.7Z"/>
<path d="M584.9,170.5L585.2,171.1L584.2,172.2L583.4,171.6L582.6,172L582.1,173.1L580.9,172.5L581,171.7L581.9,170.7L582.9,170.9L583.6,170.2ZM596,165.3L595.3,166.7L595.6,167.6L594.7,168.8L592.5,169.6L589.4,169.7L586.9,171.7L585.8,171L585.7,169.7L582.7,170.1L580.6,171L578.6,171L580.3,172.3L579.1,175.2L578,176L577.2,175.3L577.6,173.7L576.5,173.2L575.8,172L577.4,171.5L578.4,170.4L580.1,169.5L581.4,168.3L584.9,167.8L586.8,168.1L588.6,165L589.7,165.8L592.3,164.1L593.3,163.4L594.4,161.3L594.1,159.3L594.8,158.2L596.7,157.9L597.6,160.3L597.6,161.7L596,163.5ZM601.1,153L602.4,153.4L603.6,152.6L604,154.6L601.4,155.1L599.9,156.8L597.1,155.6L596.2,157.5L594.2,157.6L594,155.8L594.8,154.5L596.7,154.4L597.2,152L597.7,150.6L599.8,152.4Z"/>
<path d="M399.6,109.5L401,109.3L404,108.6L405.8,108L408.7,109.1L413.5,109.5L420.1,111.5L421.4,112.3L421.5,113.5L419.6,114.4L416.7,114.9L408.9,113.5L407.6,113.8L410.5,115L410.6,115.8L410.7,117.6L413,118.2L414.3,118.6L414.6,117.8L413.5,117L414.6,116.4L418.8,117.5L420.3,117L419.1,115.7L423.2,114L424.8,114.1L426.5,114.7L427.5,113.5L426,112.5L426.9,111.5L425.6,110.4L430.5,110.9L431.5,111.9L429.3,112.1L429.3,113.1L430.6,113.7L433.3,113.3L433.8,112.2L437.4,111.4L443.5,109.9L444.8,110L443.1,111L445.3,111.2L446.5,110.6L449.8,110.5L452.4,109.8L454.4,110.9L456.4,109.7L454.6,108.7L455.5,108.1L460.6,108.7L463,109.2L469.4,111.2L470.5,110.3L468.8,109.4L468.7,109L466.6,108.8L467.2,108L466.2,106.6L466.2,106.1L469.4,104.5L470.6,102.9L471.9,102.6L476.5,103L476.9,104L475.2,105.4L476.3,106L476.9,107.2L476.4,109.6L478.4,110.7L477.6,111.8L474.2,114.3L476.2,114.6L476.9,113.9L478.8,113.5L479.3,112.6L480.8,111.8L479.8,110.8L480.6,109.6L478.7,109.5L478.3,108.5L479.7,106.8L477.4,105.3L480.5,104.2L480.1,102.9L481,102.9L481.9,103.9L481.2,105.5L483.1,105.9L482.3,104.6L485.2,103.9L488.8,103.8L492.1,104.8L490.5,103.4L490.3,101.5L493.4,101.1L497.6,101.2L501.4,101L500,100.1L502,98.9L504,98.9L507.4,98L512,97.8L512.6,97.3L517.2,97.1L518.6,97.5L522.5,96.6L525.7,96.6L526.2,95.9L527.9,95.1L532,94.4L535,95L532.6,95.4L536.6,95.7L537.1,96.6L538.6,96.1L543.8,96.1L547.7,97L549.1,97.7L548.7,98.6L546.7,99.1L542.1,100L540.8,100.6L543,100.8L545.6,101.3L547.2,100.9L548,102L548.8,101.6L551.6,101.3L557.2,101.6L557.6,102.4L564.9,102.7L565,101.3L568.8,101.7L571.5,101.6L574.4,102.6L575.2,103.7L574.1,104.4L576.3,105.8L579.1,106.5L580.8,104.7L583.6,105.4L586.5,105L589.9,105.5L591.2,105L594.1,105.3L592.8,103.6L595.1,102.9L610.9,104L612.4,105.1L617,106.4L624,106.1L627.5,106.4L629,107.1L628.7,108.4L630.9,108.9L633.2,108.5L636.3,108.5L639.6,108.8L643,108.6L646,110.2L648.2,109.6L646.7,108.5L647.5,107.7L653.1,108.2L656.7,108.1L661.8,108.9L664.2,109.7L664.2,116.6L661.9,117.4L659.7,117.3L661.2,118.2L662.3,119.7L663.1,120.1L663.3,120.9L662.9,121.3L659.6,120.9L654.7,122.3L653.2,122.5L650.5,123.7L647.9,124.8L647.3,125.6L644.8,124.4L640.2,125.7L639.5,125.1L637.8,125.8L635.4,125.6L634.9,126.7L632.8,128.4L632.8,129.1L634.8,129.5L634.6,132.1L633,132.1L632.2,133.6L633,134.3L629.9,135.2L629.3,137.2L626.7,137.7L626.2,139.4L623.6,141.1L623,139.9L622.2,137.3L621.3,133.4L622.1,131L623.6,130L623.7,129.1L626.4,128.7L629.5,126.6L632.5,124.8L635.7,123.4L637.1,120.9L634.9,121L633.9,122.5L629.5,124.4L628,122.3L623.5,122.9L619.1,125.8L620.6,126.9L616.7,127.3L614,127.5L614.1,126.2L611.4,125.9L609.2,126.8L603.9,126.5L598.1,127L592.5,130.4L585.8,134.6L588.5,134.8L589.4,135.9L591.1,136.3L592.2,135.4L594.1,135.5L596.7,137.4L596.7,138.9L595.3,140.7L595.2,142.7L594.4,145.5L591.8,148.1L591.2,149.3L588.8,151.3L586.5,153.3L585.3,154.4L583,155.4L581.9,155.4L580.8,154.6L578.5,155.8L578.2,156.4L577.9,156.1L577.9,155.2L578.8,155.2L579.1,153.1L578.6,151.6L580.1,151L582.2,151.3L583.4,149.6L584,147.7L584.7,147.1L585.6,145.5L582.7,146L581.2,146.7L578.6,146.7L577.8,145L575.8,143.8L572.7,143.2L572.1,141.5L571.5,140.5L570.8,139.7L569.7,137.9L568.2,137.3L565.6,136.8L563.3,136.8L561.1,137.1L559.7,138L560.6,138.4L560.6,139.4L559.7,140L558.1,141.8L558.1,142.6L555.6,143.7L553.5,143L551.5,143.2L550.5,142.6L549.5,142.4L546.9,143.6L544.6,143.9L543,144.3L540.8,144.1L539.2,144.1L538.2,143.2L536.4,142.4L534.7,142.1L532.5,142.3L530.8,142.7L528.3,141.9L528,140.6L526,140.2L524.4,140L522.4,139.2L520.6,141.1L521.3,142.1L519.6,143.3L517.1,142.9L515.3,142.8L514.2,142L512.3,142L510.8,141.4L508.2,142.2L504.8,143.8L503,144L502.3,144.2L501.4,143.1L499.1,143.4L498.4,142.6L497.2,142.3L496.3,141.3L495.4,141L492.9,141.4L490.4,140.4L489.5,141.3L485.6,136.9L483.4,135.5L484,135L479.6,136.6L478,136.7L478.1,135.8L475.9,135.2L474,135.6L473.5,133.8L470.3,133.4L468.8,134.1L464.4,134.8L463.6,135.2L457,135.8L456.2,136.4L457.5,137.6L455.8,138.1L456.1,138.5L454.4,139.4L457.3,140.6L456.8,141.4L454.4,141.4L453.9,141.9L451.6,141L448.9,141L447,141.7L444.9,141L441.1,139.8L438.4,139.9L434.8,141.8L434.5,143.1L432.7,142L431.3,143.9L431.9,144.3L430.9,145.6L432.3,146.8L433.6,146.8L434.7,147.9L434.6,148.8L435.5,149.1L434.7,150.1L433,150.4L431.2,152.2L432.8,153.9L432.6,155.1L434.5,157.1L433.5,157.8L433.2,158.3L432.4,158.2L431.2,157.1L430.7,157L429.7,156.6L429.1,155.9L427.5,155.6L426.4,155.8L426.1,155.5L423.7,154.7L421.2,154.4L419.7,154.1L419.5,154.3L417.2,152.8L415.3,152.2L413.7,151.1L415,150.9L416.5,149.4L415.5,148.7L418.1,148L418,147.6L416.4,147.9L416.5,147.1L417.4,146.6L419.1,146.5L419.4,145.9L419,145L419.7,144L419.7,143.5L417.1,142.9L416.1,143L415,142.2L413.7,142.4L411.4,141.8L411.5,141.5L410.8,140.7L409.4,140.6L409.3,140.1L409.7,139.7L408.6,138.7L406.8,138.9L406.3,138.8L405.8,139.2L405.2,139.2L404.8,138L404.4,137.5L404.7,137.3L406.1,137.4L406.8,137L406.3,136.5L405.1,136.2L405.2,135.9L404.5,135.6L403.4,134.4L403.8,133.9L403.6,133.1L401.9,132.7L401,132.9L400.7,132.5L398.9,132L398.3,131L398.2,130.2L397.3,129.8L398.1,129.2L397.6,127.6L398.8,126.6L398.5,126.3L400.5,125.3L398.7,124.5L402.4,122.2L404.1,121.2L404.7,120.3L402.1,119.1L402.8,118L401.3,116.7L402.5,115.2L400.4,113.2L402,111.9L399.4,110.7ZM389.4,135.3L386.2,135.3L384,135.1L384.4,134.3L386.8,133.8L388.7,134.1L389.4,134.3L389.2,134.8ZM600.7,141.5L602.4,144.6L599.8,144L598.8,146.6L600.5,148.3L600.4,149.6L599.1,148.5L598,149.9L597.6,148.4L597.8,146.7L597.6,144.8L598,143.5L598.1,141.2L597.1,139.4L597.2,137.1L598.9,136.3L598.2,135.4L598.9,135.2L599.4,136.4L600,138L600,139.7ZM468.8,95.7L470,96.4L468.8,97L462.6,97.8L457.3,98.7L451.8,100.3L449.2,102.1L446.5,103.7L446.8,105.2L450.2,106.6L449.2,106.8L443.5,106.5L443,105.8L439.8,105.3L439.6,104.4L441.4,104L441.3,103L444.8,101.5L443.2,101.3L447.3,99.8L446.9,99L450.8,98.1L456.5,97L462.4,96.6L465.4,96ZM517.3,88.2L520.7,89.1L524.7,90.8L524.3,92.4L520.5,92.6L515.6,92.1L512.7,91.4L511.4,90.2L509,89.8L513.5,88.6ZM533.3,93.4L523.4,94L526.6,91.7L528.1,91.5L529.4,91.7L533.8,92.7ZM592.3,97.1L596.9,97.2L603.2,98.2L601.8,99.5L595.4,99.4L592.5,99.8L589,98.7L589.9,97.5ZM35.1,109.7L39.4,111L44,112.8L43.8,113.9L45,114.3L44.6,113L49.3,113.3L52.7,114.9L51,115.7L48.2,115.8L48.1,117.6L47.4,117.9L45.8,117.9L44.4,117.3L42.1,116.8L41.7,116L40,115.7L38,115.9L37,115.3L37.4,114.7L35.3,115.1L36.1,115.9L35.1,116.6Z"/>
<path d="M652,301.7L652.4,302.4L653.6,301.7L654.2,302.5L654.2,303.2L653.5,304L652.4,305.3L651.5,306L652.1,306.8L650.8,306.9L649.3,307.5L648.8,308.7L647.8,310.4L646.4,311.2L645.6,311.7L643.9,311.7L642.8,311.1L640.9,311L640.6,310.3L641.6,309L643.8,307.3L644.9,307L646.1,306.3L647.6,305.4L648.7,304.5L649.5,303.2L650.1,302.7L650.4,301.8L651.6,301ZM654.8,293.4L656.1,295.2L656.1,294L656.9,294.5L657.1,295.8L658.5,296.4L659.7,296.5L660.7,295.9L661.6,296.1L661.2,297.6L660.7,298.6L659.3,298.6L658.9,299.1L659,299.9L658.8,300.2L658.1,301.1L657.2,302.4L655.9,303.1L655.6,302.6L654.9,302.3L655.9,300.9L655.3,299.9L653.4,299.2L653.5,298.6L654.7,298L655,296.7L654.9,295.5L654.2,294.4L654.3,294L653.4,293.3L652.1,291.8L651.3,290.5L652,290.4L652.9,291.4L654.3,291.8Z"/>
<path d="M338,122.4L338.3,121.7L337.7,121.1L336.8,121.3L336.5,122L337.1,122.6Z"/>
</g>
<g fill="#398838">
<path d="M103.3,108.5L106.5,108.8L109.3,109.6L111.1,109.8L112.6,109.1L114.8,108.5L117.4,108.7L120,108L122.8,107.5L124,108.3L125.3,107.9L125.7,107L126.9,107.2L129.9,108.8L132.2,107.6L132.5,108.9L134.6,108.6L135.3,108.1L137.4,108.2L140.1,109L144.1,109.6L146.5,109.9L148.3,109.8L150.6,110.7L148.2,111.5L151.3,111.9L156,111.7L157.5,111.4L159.4,112.5L161.3,111.6L159.5,110.8L160.6,110.2L162.8,110.1L164.2,110L165.6,110.4L167.3,111.3L169.3,111.2L172.4,112L175.1,111.7L177.6,111.8L177.4,110.7L179,110.4L181.7,111L181.7,112.6L182.8,111.2L184.2,111.3L185,109.5L183.1,108.4L181.1,107.7L181.2,105.8L183.3,104.5L185.6,104.8L187.3,105.6L189.7,107.5L188.2,108.4L191.4,108.7L191.4,110.5L193.7,109.2L195.8,110.3L195.3,111.6L197,112.8L198.8,111.5L200.1,110L200.2,108.1L202.7,108.2L205.3,108.5L207.6,109.3L207.7,110.2L206.4,111.1L207.6,112.1L207.4,112.9L204,114.1L201.6,114.4L199.8,113.9L199.2,114.8L197.6,116.2L197.1,117L195,118.2L192.5,118.3L191.2,119L191,120.2L189,120.4L186.9,121.8L185,123.8L184.3,125.2L184.2,127.2L186.7,127.5L187.6,129.1L188.4,130.4L190.8,130.1L194.1,130.9L195.8,131.5L197.1,132.3L199.2,132.8L201.1,133.6L204,133.7L205.9,133.8L205.6,135.3L206.1,137.1L207.4,139.1L210,140.7L211.4,140.2L212.3,138.4L211.4,135.6L210.1,134.7L212.9,133.8L214.9,132.6L215.9,131.4L215.8,130.2L214.6,128.8L212.4,127.4L214.5,125.6L213.7,124L213.2,121.3L214.4,120.9L217.4,121.4L219.2,121.5L220.6,121.1L222.2,121.7L224.4,122.7L224.9,123.4L228,123.5L228,125L228.6,127.2L230.2,127.4L231.4,128.5L234,127.5L235.6,125.6L236.8,124.8L238.2,126.3L240.4,128.5L242.4,130.6L241.7,131.7L244,132.7L245.6,133.7L248.3,134.2L249.5,134.7L250.1,136.2L251.5,136.4L252.2,137.1L252.3,139.1L251.1,139.7L249.8,140.3L246.9,141L244.7,142.4L241.8,142.7L238.1,142.3L235.4,142.3L233.6,142.4L232.1,143.7L229.9,144.5L229.8,145.3L229.2,145.8L229.6,146L229.7,145.8L233.4,144.3L236,144.2L237.5,145L235.9,146.2L236.4,148.1L237,149.4L239.3,150.3L242.1,150L243.9,148.1L244,149.3L245.1,150L243,151.1L239.1,152.1L237.4,152.8L235.4,154.1L234.1,154L234,152.5L237.1,151.1L234.3,151.1L232.3,151.3L231.2,150.3L231.2,147.9L230.4,147.5L229.2,147.7L228.7,147.3L227.3,148.6L226.8,150L226.2,150.8L225.4,151L224.9,151.1L224.7,151.5L218.8,151.6L218,151.9L216,153.3L215.4,154L212.1,154L211.3,154.2L211.6,154.6L211.7,155.3L209.4,156.2L207.6,156.4L205.6,157.4L204.4,156.7L204.8,156.1L205.6,155.1L206.1,154.1L205.8,152.5L205.4,151L203.6,150.1L203.8,149.8L203.5,149.6L202.7,149.3L201.9,148.9L201.5,148.7L201.3,148.2L198.6,147.1L196.8,146.4L195.2,145.8L193.1,146.3L190.9,145.8L189.5,146.1L187.8,145.5L186,145.3L184.3,144.9L184,143.9L183.4,143.9L183.4,144.6L174.9,144.6L167.9,144.6L157.4,144.6L146.9,144.6L135,144.6L134.8,144.6L131.4,142.9L130.1,142.1L126.9,141.4L126,139.8L126.2,138.8L124,138L123.7,136.6L121.6,135.3L121.5,134.4L122.5,133.6L122.5,132.5L119.5,131.4L116.6,128.1L115,127.3L113.8,126.6L112.9,125.7L111.2,126.3L109.5,127.3L107.9,126.1L106.7,125.3L105,124.9L103.3,124.8ZM133.8,145.4L133,145.6L130.1,144.9L129.6,144.3L128,143.6L127.7,143.2L125.9,142.8L125.2,141.9L125.3,141.5L127.2,141.9L128.2,142.1L129.9,142.3L130.5,142.9L131.4,143.7L133.1,144.5ZM117.8,135.8L119.4,135.6L118.9,137.6L120.4,139L119.7,139L118.7,138.2L118,137.4L117.1,136.9L116.8,136.1L116.9,135.5ZM252.5,140.5L251.6,141.6L250.4,143.2L251.5,142.6L252.7,142.9L252.1,143.5L253.6,144L254.5,143.6L256.2,144.1L255.7,145.4L256.9,145.1L257.1,146L257.6,147.1L256.9,148.7L256.1,148.7L255,148.4L255.4,147L254.9,146.8L252.8,148.3L251.8,148.2L253,147.4L251.4,147L249.5,147.1L246.1,147L245.8,146.5L246.9,145.9L246.1,145.4L247.6,144.3L249.4,141.6L250.5,140.6ZM237.8,148L238.4,148.9L239.7,149.1L241.3,149L240.4,149.8L239.8,149.9L237.6,149.1L237.1,148.5ZM236.9,143.1L237.5,142.9L239.8,143.3L241.6,144.1L241.6,144.4L240.8,144.4L238.5,143.9ZM219.9,104.8L223.4,105.1L225.2,106.3L229.4,106.9L231,107.7L232.6,109.3L229.4,110.1L233.5,111.2L236.3,111.6L238.8,113.2L241.6,113.4L241,114.6L237.9,116.6L235.8,115.9L233.1,114.2L230.8,114.4L230.6,115.4L232.4,116.4L234.8,117.2L235.5,117.7L236.6,119.4L236,120.7L233.8,120.2L229.5,118.8L231.9,120.3L233.7,121.4L234,122L229.3,121.3L225.5,120.3L223.4,119.4L224,118.9L221.4,118L218.9,117.2L218.9,117.7L213.9,118L212.4,117.4L213.5,116.1L216.8,116L220.4,115.8L219.8,115.2L220.4,114.3L222.7,112.6L222.2,111.8L221.5,111.2L218.9,110.4L215.3,109.8L216.4,109.4L214.6,108.3L213,108.2L211.7,107.6L210.7,108.1L207.6,108.3L201.2,107.9L197.5,107.4L194.7,107.2L193.2,106.5L195,105.7L192.6,105.7L192,104L193.4,102.4L195.2,101.7L199.7,101.2L198.4,102.4L199.8,103.5L201.4,102L205.8,101.3L208.8,103.1L208.5,104.3L212,103.8L213.7,103.1L217.5,104ZM150.1,102.4L149.3,103.2L153.2,102.7L155.6,103.6L157.6,102.7L159.2,103.3L160.6,105L161.5,104.3L160.2,102.5L161.8,102.2L163.5,102.5L165.5,103.2L166.6,104.9L167.1,106.1L170,107L173.2,107.8L173,108.6L170.1,108.7L171.2,109.4L170.7,110.1L167.5,109.8L164.5,109.3L162.5,109.4L159.2,110L154.8,110.3L151.6,110.4L150.7,109.6L148.3,109.1L146.7,109.3L144.6,107.9L145.8,107.8L148.5,107.5L150.9,107.5L153.2,107.2L149.8,106.8L146.1,107L143.6,106.9L142.7,106.3L146.7,105.6L144,105.6L141,105.1L142.5,103.8L143.7,103.1L148.4,102.1ZM139.1,105.5L134.6,106.3L133.6,105.5L129.6,104.6L130.3,103.9L131.5,102.6L133.1,101.4L131.4,100.4L137.3,100.1L139.8,100.5L144.2,100.6L145.9,101.1L147.8,101.8L145.6,102.2L141.3,103.5L139.1,104.7ZM200.8,115.5L201.1,116.2L202.1,116L203.1,116.4L205,117L207,117.6L207.1,118.4L208.4,118.3L209.7,118.8L208.1,119.4L205.4,119L204.4,118.2L202.7,119.1L200.2,120L199.6,119L197.2,119.2L198.8,118.3L199,116.9L199.6,115.3ZM174.3,101.2L176.4,101.5L179.5,101.3L179.9,101.8L178.3,102.6L180.9,103.4L180.6,105L177.8,105.7L176.1,105.5L174.9,104.8L170.5,103.5L170.6,102.9L174.1,103.1L172.2,102ZM186.8,103L184.9,104.3L182.9,104.3L181.8,102.7L181.9,101.9L182.8,101.1L184.5,100.7L188.1,100.7L191.5,101.1L188.9,102.7ZM180.9,108.4L182.5,109.4L181.4,110L179.1,109.5L177.6,109.7L175.2,108.9L176.8,108.4L178,107.6L179.9,108.1ZM186.1,96L189.6,96L191.1,96.6L190.7,97.3L192.7,97.7L193.8,98.1L196.1,98.1L198.7,98.3L201.5,97.9L205,97.8L207.9,97.9L209.7,98.5L210.1,99.3L209,99.7L206.4,100.1L204.2,99.9L199.2,100.2L195.6,100.2L192.8,100L188.1,99.4L187.5,98.5L187.3,97.6L185.6,96.8L182,96.6L179.9,96.1L180.6,95.4L184.2,95.5ZM229.9,85L234.6,85.1L238.4,85.3L241.6,85.8L241.5,86.3L237.2,87L233,87.4L231.4,87.8L235.2,87.8L231.1,88.8L228.3,89.3L225.3,90.7L221.7,91L220.5,91.4L215.2,91.6L217.7,91.8L216.5,92.1L217.9,93L216.2,93.6L213.5,94.1L212.7,94.8L210.3,95.3L210.5,95.7L213.5,95.6L213.5,96L208.9,97.1L204.3,96.6L199.2,96.9L196.6,96.7L193.3,96.6L193,95.7L196.3,95.3L195.4,94.1L196.5,93.9L201.1,94.7L198.8,93.6L195.9,93.2L197.4,92.6L200.4,92.1L201,91.5L198.5,90.9L197.7,90L202.5,90L203.9,90.2L206.6,89.6L202.7,89.4L196.6,89.5L193.5,88.9L192,88.2L190,87.7L189.6,87.1L192.2,86.7L194.2,86.7L197.7,86.4L200.2,85.8L202.4,85.9L204.3,86.3L205.6,85.4L207.9,85.1L211.1,84.9L216.4,84.9L217.3,85.1L222.4,84.8L226.2,84.9ZM181.9,89.4L183.1,88.8L184.9,88.7L184.1,88.3L188.2,88.2L190.4,89.1L193.3,89.5L196.2,89.8L197.6,91L199.7,91.6L197.3,92.1L194.1,93.4L191,93.5L187.3,93.3L185.5,92.6L185.5,92L186.9,91.5L183.7,91.5L181.8,90.9L180.6,90.1ZM158.2,96L160,96.2L160.6,97L161.2,97.7L162.8,97.4L164.6,97.4L164.9,98.3L163.9,99.1L157.9,99.4L153.5,100.2L150.9,100.2L150.7,99.6L154.3,98.9L146.4,99.1L144,98.8L146.3,97L148,96.6L152.9,97.1L156,98.2L159.1,98.3L156.6,96.6ZM178.9,97L178.9,97.8L178.1,99.1L175.2,99.3L173.4,99L173.4,98L170.5,98.2L170.4,96.8L172.3,96.8L174.9,96.3L177.4,96.4ZM146.6,94.5L146.3,95.9L145,96.5L143.4,96.6L140.1,97.3L137.3,97.6L135,97.2L137.9,95.9L141.5,94.8L144.2,94.8ZM165.3,91.6L168.7,91.9L173.4,92.5L174.8,93.3L175.5,94.1L172.6,93.9L169.7,93.3L165.8,93.2L167.5,92.7L165.4,92.3ZM151.3,93L157.4,92.7L157.9,93.7L153.1,94.1L150.4,93.5ZM181,98.4L184.5,98.1L186.3,99.1L183.8,99.8L181.2,99.3ZM207.6,137.2L209.3,137.8L208.1,138L206.4,137.6ZM204.6,120.3L206.5,120.3L206.5,121.3L204.4,121.5L203.4,120.8ZM209.3,121.7L211.1,121.6L210.5,122.6L209.2,122.4ZM215.1,111.4L217,110.8L218.4,112.1L216.1,112.8L214.7,112.1Z"/>
<path d="M333.9,157L334,155.8L333.2,155L335.7,153.7L337.9,154.1L340.2,154.1L342,154.4L343.5,154.3L346.3,154.3L347,155L350.2,155.8L350.9,155.4L352.8,156.2L354.9,156L355,157L353.3,158.2L351.1,158.5L350.9,159.1L349.8,160.1L349.2,161.5L349.8,162.5L348.8,163.3L348.5,164.4L347.1,164.8L345.9,166.1L343.7,166.1L342,166.1L340.9,166.7L340.2,167.4L339.4,167.2L338.7,166.6L338.3,165.6L336.6,165.4L336.5,164.8L337.1,164.1L337.4,163.7L336.8,163.1L337.2,162L336.5,160.9L337.3,160.8L337.4,160L337.7,159.7L337.7,158.4L338.5,157.9L338,157L337,156.9L336.7,157.2L335.7,157.2L335.2,156.3L334.5,156.6ZM353.8,161.2L355.1,161.5L355.7,160.7L355.1,160.4L353.8,161ZM351.7,162.2L352.4,162L352.3,161.9L351.8,162ZM356.3,160.5L357.2,160.6L357.1,160.2L356.4,160.2Z"/>
<path d="M346.3,154.3L347.2,153.3L347.6,149.8L345.8,148L344.5,147.1L341.8,146.4L341.6,145.1L343.9,144.7L346.8,145.2L346.3,143.2L347.9,144L352,142.6L352.5,141.2L354,140.8L354.3,141.4L355.1,141.5L355.9,142.2L357.1,143L358,142.8L359.6,143.6L360,143.8L360.5,143.8L361.3,144.2L363.8,144.5L362.9,145.7L362.7,147L362.2,147.3L361.4,147.1L361.5,147.6L360.2,148.5L360.2,149.3L361,149.1L361.6,149.8L361.5,150.3L362.1,151L361.4,151.5L361.9,152.9L362.8,153.1L362.7,153.9L361.1,154.8L357.6,154.4L355.1,154.9L354.9,156L352.8,156.2L350.9,155.4L350.2,155.8L347,155ZM364.9,155.7L366.1,155L366.4,156.5L365.8,157.9L365,157.5L364.6,156.4Z"/>
<path d="M355.4,140.5L356.3,140L357.9,137.4L360.3,136.7L361.7,136.7L362,137.3L361.6,138.9L361.2,139.6L360.1,139.6L360.4,141.4L359.5,141L358.3,140.2L356.7,140.6Z"/>
<path d="M366.4,147.1L366.5,147.5L366.2,147.9L367,148.2L367.9,148.3L367.8,149L367,149.3L365.7,149L365.3,149.7L364.5,149.8L364.2,149.5L363.2,150.1L362.4,150.2L361.6,149.8L361,149.1L360.2,149.3L360.2,148.5L361.5,147.6L361.4,147.1L362.2,147.3L362.7,147L364.2,147L364.5,146.6Z"/>
<path d="M371.3,148.5L373.8,148.9L373.6,149.8L374,150.5L372.6,150.3L371.2,150.9L371.3,151.8L371.1,152.3L371.7,153.2L373.3,154L374.2,155.5L376.1,156.9L377.5,156.9L377.9,157.3L377.4,157.6L379,158.2L380.3,158.8L381.8,159.7L381.9,160L381.6,160.6L380.7,159.8L379.1,159.5L378.4,160.6L379.7,161.3L379.4,162.2L378.7,162.3L377.8,163.8L377.1,164L377.1,163.4L377.4,162.5L377.8,162.1L377.1,161.1L376.6,160.2L375.9,160L375.3,159.3L374.2,158.9L373.5,158.2L372.2,158.1L370.8,157.3L369.2,156.2L368,155.2L367.5,153.4L366.6,153.2L365.2,152.7L364.4,152.9L363.4,153.7L362.7,153.9L362.8,153.1L361.9,152.9L361.4,151.5L362.1,151L361.5,150.3L361.6,149.8L362.4,150.2L363.2,150.1L364.2,149.5L364.5,149.8L365.3,149.7L365.7,149L367,149.3L367.8,149L367.9,148.3L369,148.5L369.2,148.2L370.9,147.9ZM376.8,163.4L376.1,164.8L376.4,165.3L376,166.2L374.7,165.5L373.8,165.4L371.4,164.5L371.6,163.6L373.7,163.7L375.4,163.6ZM365.7,158.2L366.8,159.4L366.5,161.7L365.7,161.6L365,162.2L364.4,161.8L364.3,159.6L363.9,158.6L364.9,158.7Z"/>
</g>
<g fill="#266a27">
<path d="M344.3,134.1L345.1,133.7L345.6,133L346.1,132.7L346.9,133.2L347.7,134.8L348.9,135L350,137L350.5,137.7L352.6,138L352.4,139.2L351.5,139.7L352.2,140.6L350.6,141.5L348.3,141.5L345.3,142L344.5,141.6L343.3,142.4L341.7,142.2L340.5,142.9L339.5,142.5L342.1,140.7L343.7,140.3L345,140L344.4,138.8L344.2,138.3L344.5,137.6L344.3,136.9L344.5,135.9L343.3,134.8L343.5,134.2Z"/>
<path d="M361.7,136.7L362.1,136.4L363.5,136.3L363.8,136.7L365,135.8L364.6,135.1L364.6,134.2L365.9,134.4L367,134.1L367,134.8L368.8,135.2L368.8,135.8L370.6,135.5L371.5,135L373.5,135.7L374.3,136.3L374.7,137.1L374.2,137.6L374.9,138.2L375.3,139.2L375.2,139.8L375.9,140.9L375.1,141.1L374.7,140.9L374.2,141.2L373,141.5L372.3,142L371,142.4L371.4,142.9L371.5,143.6L372.4,144L373.4,144.8L372.8,145.6L372.2,145.8L372.4,146.9L372.2,147.2L371.7,146.9L370.9,146.8L369.6,147.2L368.1,147.1L367.8,147.5L367,147.1L366.4,147.1L364.5,146.6L364.2,147L362.7,147L362.9,145.7L363.8,144.5L361.3,144.2L360.5,143.8L360.6,143L360.2,142.6L360.4,141.4L360.1,139.6L361.2,139.6L361.6,138.9L362,137.3Z"/>
<path d="M600.5,254.2L601.2,255.6L602.3,255L603.7,256.4L603.5,257.2L603.9,258.7L605.1,261.2L604.9,262.1L607.4,264.2L609.8,265.8L611.2,269.2L611.9,268.9L612.6,269.6L613.1,269.3L613.3,271.2L615.4,272.9L616.8,274.4L617.3,275.8L617.3,276.8L617.2,277.8L618,279.3L617.9,280.9L617.1,283.2L617.2,284.2L616.8,285.5L616.1,287.1L614.8,287.9L614.1,289.3L613,291.7L612.4,292.5L611.9,293.8L611.7,295L611.8,295.6L610.8,296.2L608.8,296.3L607.2,297L606.4,297.7L605.3,298.4L603.9,297.6L602.8,297.3L603.1,296.4L602.1,296.8L600.6,298L599.1,297.5L598.1,297.3L597.1,297.1L595.4,296.6L594.3,295.6L594,294.2L593.5,292.6L592.7,292.6L591,292.4L591.6,291.6L591.2,290.3L590.3,291.5L588.8,291.8L589.7,290.9L589.9,289.8L590.6,289L590.5,287.7L589.1,289.2L588,289.8L587.3,291.2L585.9,290.5L586,289.5L584.9,288.3L584,287.6L584.3,287.2L582.1,286.1L580.8,286.1L579.1,285.2L576,285.4L573.7,286L571.8,286.6L570.1,286.5L568.2,287.4L566.7,287.8L566.4,288.7L565.7,289.4L564.3,289.5L563.2,289.6L561.6,289.3L560.4,289.5L559.2,289.6L558.1,290.5L557.6,290.4L556.7,290.9L555.9,291.5L554.6,291.4L553.5,291.4L551.6,290.3L550.7,290L550.7,289L551.6,288.7L551.9,288.3L551.8,287.7L552,286.5L551.8,285.4L550.9,283.7L550.6,282.7L550.7,281.7L550,280.5L549.9,280L549.2,279.3L549,278L548,276.6L547.7,275.8L548.5,276.6L547.9,275L548.8,275.5L549.3,276.2L549.2,275.3L548.4,273.9L548.2,273.3L547.8,272.8L548,271.8L548.4,271.4L548.6,270.5L548.4,269.5L549.1,268.2L549.3,269.6L550,268.3L551.4,267.8L552.3,267L553.6,266.4L554.4,266.2L554.9,266.5L556.3,265.8L557.3,265.6L557.6,265.2L558,265.1L559,265.1L560.9,264.6L561.8,263.8L562.3,262.9L563.3,262L563.4,261.3L563.4,260.3L564.6,258.9L565.3,260.4L566.1,260L565.5,259.2L566,258.4L566.8,258.7L567,257.4L568,256.6L568.4,255.9L569.3,255.6L569.3,255.1L570.1,255.3L570.1,254.8L570.8,254.6L571.7,254.4L573,255.2L574,256.2L575.1,256.2L576.2,256.4L575.8,255.4L576.6,254L577.4,253.5L577.1,253.1L577.9,252.1L579,251.5L579.9,251.7L581.3,251.4L581.3,250.5L580,249.9L580.9,249.6L582.1,250.1L583,250.8L584.5,251.2L585,251.1L586.1,251.6L587.1,251.1L587.8,251.3L588.2,250.9L589,251.8L588.5,252.7L587.9,253.4L587.2,253.5L587.4,254.2L586.9,255L586.3,255.9L586.4,256.4L587.8,257.4L589.2,257.9L590.1,258.5L591.3,259.6L591.8,259.6L592.7,260L593,260.6L594.7,261.1L595.8,260.6L596.2,259.6L596.5,258.8L596.7,257.9L597.3,256.5L597,255.6L597.2,255.1L597,254.1L597.2,252.8L597.5,252.5L597.3,251.9L597.7,251L598,250L598,249.5L598.7,248.8L599.2,249.7L599.3,250.8L599.8,251L599.8,251.7L600.5,252.6L600.6,253.6ZM603.7,301.5L605.4,302.1L606.4,301.8L607.7,301.5L608.8,301.6L608.9,303.7L608.3,304.3L608.1,305.7L607.5,305.2L606.3,306.4L605.9,306.4L604.9,306.3L603.8,304.8L603.6,303.6L602.5,302.1L602.6,301.3Z"/>
</g>
<g fill="#1a561b">
<path d="M135,144.6L146.9,144.6L157.4,144.6L167.9,144.6L174.9,144.6L183.4,144.6L183.4,143.9L184,143.9L184.3,144.9L186,145.3L187.8,145.5L189.5,146.1L190.9,145.8L193.1,146.3L195.2,145.8L196.8,146.4L198.6,147.1L201.3,148.2L201.5,148.7L201.9,148.9L202.7,149.3L203.5,149.6L203.8,149.8L203.6,150.1L205.4,151L205.8,152.5L206.1,154.1L205.6,155.1L204.8,156.1L204.4,156.7L205.6,157.4L207.6,156.4L209.4,156.2L211.7,155.3L211.6,154.6L211.3,154.2L212.1,154L215.4,154L216,153.3L218,151.9L218.8,151.6L224.7,151.5L224.9,151.1L225.4,151L226.2,150.8L226.8,150L227.3,148.6L228.7,147.3L229.2,147.7L230.4,147.5L231.2,147.9L231.2,150.3L232.3,151.3L232.6,151.9L230.8,152.7L229,153.3L227.1,153.9L226.2,154.9L225.9,155.3L225.9,156.2L226.5,157.2L227.2,157.2L227,156.5L227.5,156.9L227.4,157.4L226.2,157.7L225.4,157.7L224.1,158L223.3,158.1L222.3,158.2L220.8,158.7L223.4,158.3L223.9,158.7L221.5,159.2L220.4,159.2L220.4,159L219.9,159.5L220.4,159.5L220,160.8L218.7,162.2L218.6,161.7L218.2,161.6L217.7,161.2L218,162.1L218.5,162.4L218.5,163.1L217.9,163.8L216.9,165.2L216.8,165.1L217.3,163.9L216.4,163.2L216.2,161.8L215.9,162.5L216.3,163.7L215.1,163.4L216.3,163.9L216.4,165.6L216.9,165.7L217.1,166.3L217.3,168.1L216.2,169.4L214.4,169.9L213.3,170.9L212.4,171L211.5,171.7L211.2,172.3L209.3,173.4L208.3,174.2L207.5,175.3L207.2,176.5L207.6,177.7L208.1,179.2L208.9,180.4L208.9,181.2L209.7,183.2L209.7,184.4L209.6,185.1L209.2,186.1L208.7,186.4L207.8,186.2L207.5,185.4L206.9,185L205.9,183.5L205.1,182.1L204.9,181.5L205.2,180.3L204.7,179.3L203.4,177.9L202.7,177.6L200.9,178.4L200.6,178.3L199.8,177.5L198.7,177.1L196.7,177.3L195.1,177.1L193.8,177.2L193.1,177.5L193.4,178L193.4,178.7L193.7,179L193.4,179.2L192.8,179L192.1,179.3L190.8,179.3L189.5,178.3L188,178.6L186.7,178.2L185.6,178.3L184.2,178.7L182.6,180L180.9,180.7L179.9,181.6L179.5,182.4L179.5,183.6L179.6,184.4L179.9,185L179.2,185L178,184.7L176.6,184.1L176.1,183.3L175.7,182.1L174.7,181.1L174.1,180L173.2,178.9L172,178.2L170.6,178.2L169.5,179.6L168,179.1L167.1,178.5L166.7,177.6L166.1,176.7L165.1,175.9L164.2,175.3L163.5,174.7L160.5,174.7L160.5,175.4L155.6,175.5L151.7,174.2L149,173.4L149.2,173L147,173.2L145,173.3L144.7,172.4L143.5,171.4L142.7,171.2L142.5,170.7L141.6,170.6L140.9,170.2L139.3,170L138.9,169.7L138.7,168.8L137,167L135.5,164.6L135.6,164.2L134.8,163.6L133.4,162.1L133.2,160.7L132.3,159.8L132.6,158.3L132.6,156.8L132,155.5L132.7,153.8L133.1,150.7L132.8,148.3L132.3,146.8L131.8,146L132,145.7L134.5,146.3L135.4,147.9L135.9,147.4L135.6,146ZM103.3,108.5L103.3,124.8L105,124.9L106.7,125.3L107.9,126.1L109.5,127.3L111.2,126.3L112.9,125.7L113.8,126.6L115,127.3L116.6,128.1L119.5,131.4L122.5,132.5L122.5,133.6L121.5,134.4L120.6,133.8L119,133.2L118.5,131.7L116.3,130.3L115.3,128.6L113.7,128.5L110.9,128.5L108.8,128L105.2,126.2L103.5,125.8L100.5,125.2L98.1,125.3L94.6,124.5L92.6,123.8L90.6,124.2L91,125.4L90,125.5L88,125.9L86.5,126.5L84.5,126.8L84.3,125.8L85.1,124.1L86.9,123.6L86.4,123.1L84.2,124.1L83,125.2L80.5,126.5L81.8,127.3L80.1,128.6L78.2,129.3L76.5,129.9L76.1,130.6L73.3,131.5L72.8,132.4L70.7,133.1L69.5,133L67.9,133.5L66.1,134.1L64.7,134.6L61.7,135.1L61.4,134.8L63.3,134L65,133.5L66.9,132.5L69.1,132.3L69.9,131.6L72.4,130.6L72.7,130.2L74,129.6L74.3,128.3L75.2,127.2L73.2,127.8L72.6,127.5L71.7,128.1L70.6,127.2L70.1,127.8L69.4,127L67.7,127.7L66.6,127.7L66.5,126.6L66.8,126L65.6,125.4L63.4,125.7L61.9,124.9L60.7,124.5L60.7,123.5L59.4,122.7L60,121.7L61.5,120.8L62.1,119.8L63.5,119.7L64.7,120L66.1,119.2L67.4,119.3L68.7,118.8L68.4,118L67.4,117.7L68.7,117L67.6,117L65.8,117.4L65.2,117.8L63.8,117.4L61.4,117.6L58.8,117.2L58.1,116.5L55.9,115.4L58.3,114.7L62.2,113.9L63.7,113.9L63.4,114.7L67.1,114.7L65.7,113.6L63.5,112.9L62.3,112L60.6,111.3L58.2,110.7L59.2,109.8L62.3,109.8L64.5,109L64.9,108.1L66.7,107.3L68.4,107.1L71.7,106.3L73.3,106.4L76,105.5L78.7,105.9L79.9,106.7L80.7,106.3L83.7,106.4L83.6,106.8L86.2,107.1L88,106.9L91.7,107.5L95.1,107.7L96.4,107.9L98.7,107.6L101.4,108.1ZM82.3,130.4L80.5,131.1L79.7,130.6L79.3,129.7L80.9,129.2L81.9,128.9L83,129L83.9,129.5ZM49.6,118.7L50.7,119.1L51.7,118.9L53.1,119.4L54.8,119.6L54.7,119.8L53.4,120.1L52.1,119.8L51.4,119.4L49.8,119.6L49.4,119.4ZM77.9,196.8L77.6,197.2L77.2,196.8L77.2,196.5L76.9,195.8L77.4,195.2L77.2,194.9L78.4,195.3L79.1,196.1ZM76.9,194.2L76.3,194.2L75.8,193.7L76,193.5L76.5,193.7ZM74.1,193L73.4,193L73,192.6L73.5,192.3L74.1,192.7ZM71.3,191.8L70.9,191.9L70.4,191.6L70.7,191.3L71.1,191.4ZM58.7,124.7L60.1,124.8L60.3,125.5L59.2,125.8L58.1,125.5L57,125Z"/>
<path d="M577.9,156.1L576.8,155.1L576.1,156.1L573.4,156.8L573.7,157.7L572.2,157.7L571.4,157.1L570.1,158.4L568.2,159.3L566.8,160.4L564.4,160.9L563.1,161.8L561.2,162.2L562.1,161.4L561.8,160.7L563.1,159.6L562.2,158.6L560.7,159.3L558.7,160.5L557.6,161.6L555.9,161.7L555,162.5L556,163.7L557.4,164L557.4,164.8L558.8,165.3L560.8,164L562.3,164.7L563.5,164.8L563.8,165.7L561.3,166.2L560.5,167.1L558.8,168L557.9,169.2L559.8,170.2L560.4,171.9L561.5,173.5L562.7,174.8L562.7,176.1L561.6,176.6L562,177.5L563,178.1L562.7,179.5L562.3,180.9L561.3,181L560,182.9L558.6,185.2L557,187.3L554.6,188.9L552.2,190.4L550.2,190.6L549.1,191.4L548.5,190.8L547.5,191.7L545.1,192.5L543.3,192.8L542.6,194.7L541.7,194.8L541.2,193.5L541.6,192.8L539.3,192.2L538.5,192.5L536.7,192.1L535.9,191.4L536.2,190.4L534.6,190L533.7,189.4L532.2,190.3L530.5,190.5L529.1,190.5L528.2,191L527.3,191.2L527.5,193.2L526.6,193.2L526.5,192.7L526.4,192L525.1,192.5L524.4,192.2L523.1,191.5L523.6,190.1L522.5,189.8L522.1,188.2L520.2,188.4L520.4,186.4L522.1,184.9L522.1,183.5L522.1,182.1L521.3,181.7L520.7,180.7L519.7,180.8L517.8,180.6L518.4,179.8L517.6,178.7L516.4,179.5L514.9,179L512.9,180.2L511.3,181.4L509.9,181.7L509.1,181.2L508.2,181.2L507,180.7L506,181.2L504.8,182.5L504.7,181.1L503.6,181.5L501.6,181.3L499.6,180.9L498.2,180.2L496.8,179.8L496.3,179L495.3,178.7L493.5,177.6L492.1,177L491.4,177.5L489,176.2L487.2,175.1L486.8,173.2L488,173.4L488.1,172.5L487.4,171.6L487.5,170.2L485.7,168.2L482.8,167.5L482.3,166.1L481,165.3L480.7,164.8L480.4,163.8L480.5,163.1L479.4,162.7L478.8,162.9L478.4,161.3L478.9,160.9L478.7,160.5L480.3,159.7L481.5,159.3L483.4,159.5L484,158.4L486.3,158.2L486.9,157.5L489.7,156.6L489.9,156.2L489.8,155.2L491,154.7L489.4,151.7L492.9,151L493.7,150.6L495,147.5L498.5,148.1L499.4,147.3L499.5,145.5L501,145.4L502.3,144.2L503,144L503.4,145.3L504.9,146.2L507.4,146.9L508.6,148.3L508,150.3L508.6,151.1L510.6,151.4L513,151.6L515.1,152.7L516.2,152.9L517,154.5L518,155.5L519.9,155.5L523.6,155.9L525.9,155.7L527.6,155.9L530.2,157L532.3,157L533.1,157.5L535.1,156.6L537.9,156L540.5,155.9L542.6,155.3L543.8,154.3L545.1,153.8L544.8,153.2L544.2,152.5L545.1,151.4L546.1,151.5L547.9,151.9L549.7,151L552.3,150.3L553.6,149.1L554.8,148.6L557.4,148.4L558.8,148.6L558.9,148L557.4,146.8L556,146.2L554.6,146.8L552.9,146.6L551.9,146.8L551.5,146.1L552.7,144.3L553.5,143L555.6,143.7L558.1,142.6L558.1,141.8L559.7,140L560.6,139.4L560.6,138.4L559.7,138L561.1,137.1L563.3,136.8L565.6,136.8L568.2,137.3L569.7,137.9L570.8,139.7L571.5,140.5L572.1,141.5L572.7,143.2L575.8,143.8L577.8,145L578.6,146.7L581.2,146.7L582.7,146L585.6,145.5L584.7,147.1L584,147.7L583.4,149.6L582.2,151.3L580.1,151L578.6,151.6L579.1,153.1L578.8,155.2L577.9,155.2ZM542.5,197.6L541,198.4L539.5,197.9L539.5,196.4L540.3,195.6L542.2,195.1L543.3,195.1L543.6,195.8Z"/>
</g>
</g></svg>
<!--/MAP-->
  <svg class="abs" style="left:0;top:55px" width="200" height="370" viewBox="243 55 200 370">
    <g fill="#0a4a10">
      <rect x="270" y="73" width="18" height="54" rx="9"/>
      <rect x="261" y="91" width="36" height="18" rx="9"/>
      <rect x="270" y="132" width="18" height="54" rx="9"/>
    </g>
    <g fill="#fff">
      <path d="M279.2 76.6L284.8 85.8H273.6Z"/>
      <path d="M279.2 122.6L284.8 113.8H273.6Z"/>
      <path d="M265.2 100L274.2 94.8V105.2Z"/>
      <path d="M293.2 100L284.2 94.8V105.2Z"/>
      <rect x="274.2" y="140.7" width="10" height="2"/><rect x="278.2" y="136.7" width="2" height="10"/>
      <rect x="274.2" y="174.3" width="10" height="2"/>
      <circle cx="279.2" cy="158.7" r="8.2" fill="#f7f8fd"/>
    </g>
    <g fill="none" stroke="#6266d2" stroke-width="0.5">
      <circle cx="279.2" cy="158.7" r="7.9"/>
      <ellipse cx="279.2" cy="158.7" rx="4.2" ry="7.9"/>
      <path d="M271.3 158.7H287.1M272.7 154.4Q279.2 156.8 285.7 154.4M272.7 163Q279.2 160.6 285.7 163M279.2 150.8V166.6"/>
    </g>
  </svg>
  <div class="abs" style="left:9px;top:395px;width:151px;height:20px;background:linear-gradient(90deg,#ffffff 0%,#d3e8d3 22%,#9ccb9c 45%,#5fa85f 65%,#1d801d 85%,#065a06 95%,#004a00 100%)"></div>
  <div class="abs" style="left:10px;top:395px;font-size:12px;line-height:14px;color:#1c1c1c">0</div>
  <div class="abs" style="left:99px;top:395px;font-size:12px;line-height:14px;color:#10240f">76,713</div>
  <div class="hl" style="top:425px"></div>
  <div class="mh" style="left:19px;top:436px">Report View by Selection</div>
  <div class="mh lnk" style="left:623px;top:436px">Customize</div>
  <div class="hl" style="top:461px"></div>
  <div id="tbl">
    <div class="row" style="top:0;height:39px;background:#f3f3f3;border-bottom:none">
      <div style="left:14px;top:4px;font-weight:bold;line-height:16px;white-space:normal;width:40px;text-align:left">Total:<br>&nbsp;&nbsp;7</div>
      <div style="left:80px;top:12px;font-weight:bold">Research Fields</div>
      <div style="left:216.3px;top:4px;font-weight:bold">Web of Science</div><div style="left:224.6px;top:20px;font-weight:bold">Documents</div>
      <div style="left:358px;top:12px;font-weight:bold;color:#3f7fb5">Cites</div><div style="left:395.6px;top:17.2px;width:0;height:0;border-left:3.6px solid transparent;border-right:3.6px solid transparent;border-top:4.2px solid #6a9ed6"></div>
      <div style="left:457px;top:12px;font-weight:bold">Cites/Paper</div>
      <div style="left:593px;top:12px;font-weight:bold">Top Papers</div>
    </div>
<!--ROWS-->
    <div class="row" style="top:39px;height:33px">
      <div class="n" style="top:7.2px">1</div>
      <div class="f" style="top:1.55px">CLINICAL<br>MEDICINE</div>
      <div class="d" style="top:7.2px">4,206</div>
      <div class="c" style="top:7.2px">38,608</div>
      <div class="p" style="top:7.2px">9.18</div>
      <div class="bar" style="top:6.4px"><b style="width:98px"></b><span class="w">25</span></div>
    </div>
    <div class="row" style="top:72px;height:47px">
      <div class="n" style="top:14.2px">2</div>
      <div class="f" style="top:3.15px">PHARMACOLOG<br>Y &amp;<br>TOXICOLOGY</div>
      <div class="d" style="top:14.2px">1,982</div>
      <div class="c" style="top:14.2px">24,850</div>
      <div class="p" style="top:14.2px">12.54</div>
      <div class="bar" style="top:14.1px"><b style="width:55px"></b><span>14</span></div>
    </div>
    <div class="row" style="top:119px;height:47px">
      <div class="n" style="top:14.2px">3</div>
      <div class="f" style="top:3.25px">MOLECULAR<br>BIOLOGY &amp;<br>GENETICS</div>
      <div class="d" style="top:14.2px">700</div>
      <div class="c" style="top:14.2px">14,072</div>
      <div class="p" style="top:14.2px">20.10</div>
      <div class="bar" style="top:13.9px"><b style="width:15px"></b><span>4</span></div>
    </div>
    <div class="row" style="top:166px;height:26px">
      <div class="n" style="top:3.7px">4</div>
      <div class="f" style="top:6.25px">CHEMISTRY</div>
      <div class="d" style="top:3.7px">718</div>
      <div class="c" style="top:3.7px">9,412</div>
      <div class="p" style="top:3.7px">13.11</div>
      <div class="bar" style="top:3.4px"><b style="width:7px"></b><span>2</span></div>
    </div>
    <div class="row" style="top:192px;height:34px">
      <div class="n" style="top:7.7px">5</div>
      <div class="f" style="top:3.25px">BIOLOGY &amp;<br>BIOCHEMISTRY</div>
      <div class="d" style="top:7.7px">808</div>
      <div class="c" style="top:7.7px">8,241</div>
      <div class="p" style="top:7.7px">10.20</div>
      <div class="bar" style="top:6.9px"><b style="width:11px"></b><span>3</span></div>
    </div>
    <div class="row" style="top:226px;height:34px">
      <div class="n" style="top:7.7px">6</div>
      <div class="f" style="top:3.05px">AGRICULTURAL<br>SCIENCES</div>
      <div class="d" style="top:7.7px">221</div>
      <div class="c" style="top:7.7px">3,473</div>
      <div class="p" style="top:7.7px">15.71</div>
      <div class="bar" style="top:6.9px"><b style="width:3px"></b><span>1</span></div>
    </div>
    <div class="row" style="top:260px;height:26px">
      <div class="n" style="top:3.7px">0</div>
      <div class="f" style="top:6.45px">ALL FIELDS</div>
      <div class="d" style="top:3.7px">10,348</div>
      <div class="c" style="top:3.7px">120,321</div>
      <div class="p" style="top:3.7px">11.63</div>
      <div class="bar" style="top:2.9px"><b style="width:98px"></b><span class="w">62</span></div>
    </div>
<!--/ROWS-->
    <svg class="abs" style="left:57px;top:110px" width="150" height="66" viewBox="300 571 150 66"><rect x="308.7" y="579.3" width="133.2" height="48.9" rx="3" fill="none" stroke="#f5200f" stroke-width="2.5"/></svg>
  </div>
</div>
</body>
</html>
